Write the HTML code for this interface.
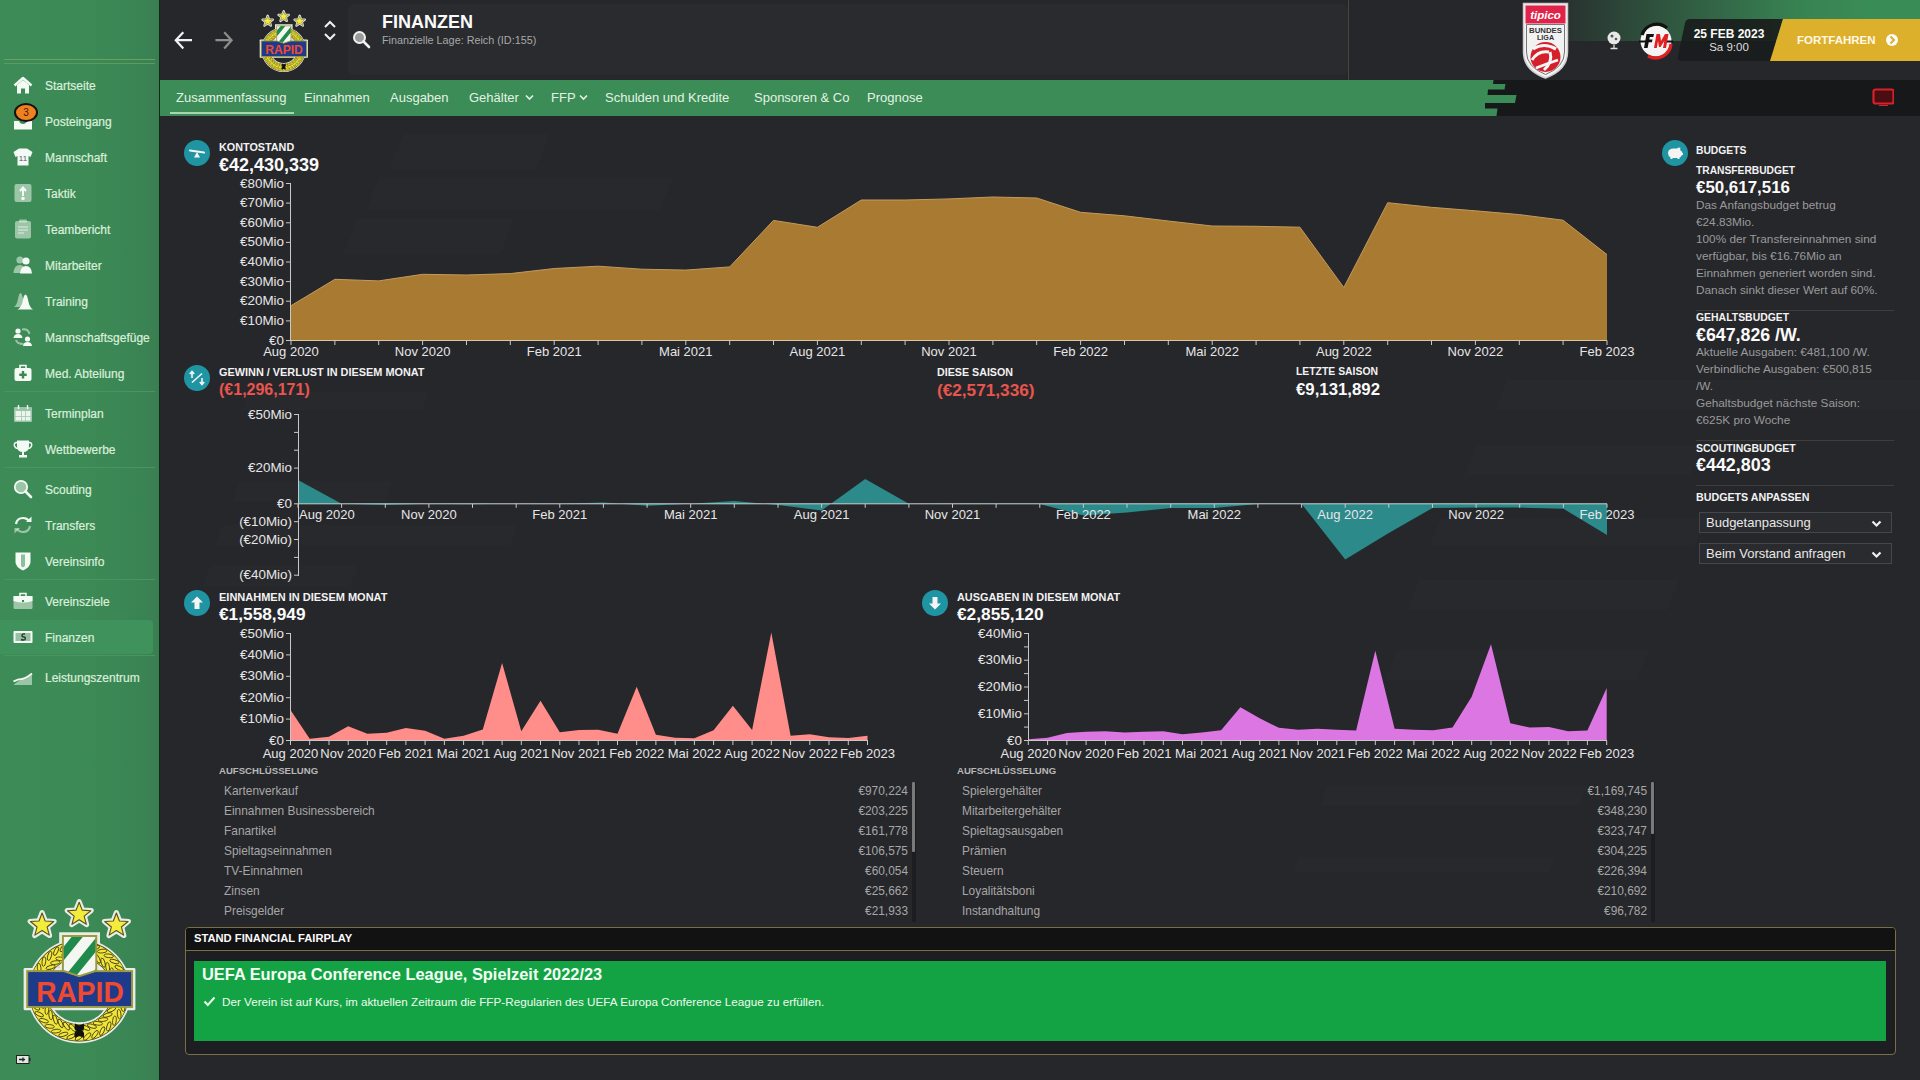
<!DOCTYPE html><html><head><meta charset="utf-8"><style>
*{margin:0;padding:0;box-sizing:border-box}
html,body{width:1920px;height:1080px;overflow:hidden;background:#26272b;font-family:"Liberation Sans", sans-serif}
.t{position:absolute;white-space:nowrap;line-height:1}
.abs{position:absolute}
svg{position:absolute;left:0;top:0}
</style></head><body>
<svg width="1920" height="1080" viewBox="0 0 1920 1080"><polygon points="403.0,134 550.0,134 536,169 389,169" fill="rgba(255,255,255,0.013)"/><polygon points="378.8,178 672.8,178 660,210 366,210" fill="rgba(255,255,255,0.013)"/><polygon points="357.0,219 514.0,219 500,254 343,254" fill="rgba(255,255,255,0.013)"/><polygon points="249.2,392 429.2,392 422,410 242,410" fill="rgba(255,255,255,0.01)"/><polygon points="240.0,481 393.0,481 385,501 232,501" fill="rgba(255,255,255,0.01)"/><polygon points="223.0,525 518.0,525 510,545 215,545" fill="rgba(255,255,255,0.01)"/><polygon points="210.8,565 358.8,565 350,587 202,587" fill="rgba(255,255,255,0.01)"/><polygon points="1507.0,380 1932.0,380 1920,410 1495,410" fill="rgba(255,255,255,0.013)"/><polygon points="1477.0,445 1702.0,445 1690,475 1465,475" fill="rgba(255,255,255,0.013)"/><polygon points="1440.8,518 1705.8,518 1695,545 1430,545" fill="rgba(255,255,255,0.013)"/><polygon points="1419.0,580 1679.0,580 1667,610 1407,610" fill="rgba(255,255,255,0.013)"/><polygon points="1397.0,650 1649.0,650 1637,680 1385,680" fill="rgba(255,255,255,0.013)"/><polygon points="1328.0,785 1588.0,785 1580,805 1320,805" fill="rgba(255,255,255,0.01)"/><polygon points="1298.0,857 1556.0,857 1550,872 1292,872" fill="rgba(255,255,255,0.01)"/></svg>
<svg width="1920" height="1080" viewBox="0 0 1920 1080" ><polygon points="291.0,340 291.0,305.7 334.9,279.3 378.7,280.9 422.6,274.3 466.5,275.0 510.3,273.6 554.2,268.5 598.1,266.2 641.9,269.2 685.8,270.1 729.7,266.9 773.5,220.4 817.4,227.3 861.3,200.0 905.1,200.0 949.0,198.9 992.9,197.0 1036.7,198.0 1080.6,212.3 1124.5,215.8 1168.3,221.0 1212.2,226.0 1256.1,226.3 1299.9,227.2 1343.8,287.5 1387.7,202.7 1431.5,207.3 1475.4,210.8 1519.3,214.6 1563.1,220.2 1607.0,254.6 1607.0,340" fill="#a97a32"/><polyline points="291.0,305.7 334.9,279.3 378.7,280.9 422.6,274.3 466.5,275.0 510.3,273.6 554.2,268.5 598.1,266.2 641.9,269.2 685.8,270.1 729.7,266.9 773.5,220.4 817.4,227.3 861.3,200.0 905.1,200.0 949.0,198.9 992.9,197.0 1036.7,198.0 1080.6,212.3 1124.5,215.8 1168.3,221.0 1212.2,226.0 1256.1,226.3 1299.9,227.2 1343.8,287.5 1387.7,202.7 1431.5,207.3 1475.4,210.8 1519.3,214.6 1563.1,220.2 1607.0,254.6" fill="none" stroke="#c49a5c" stroke-width="1"/><line x1="290.5" y1="183" x2="290.5" y2="340.5" stroke="#c8c8c8" stroke-width="1"/><line x1="290" y1="340.5" x2="1607" y2="340.5" stroke="#d8c8a0" stroke-width="1"/><line x1="286" y1="340.5" x2="290.5" y2="340.5" stroke="#c8c8c8"/><line x1="286" y1="320.9" x2="290.5" y2="320.9" stroke="#c8c8c8"/><line x1="286" y1="301.2" x2="290.5" y2="301.2" stroke="#c8c8c8"/><line x1="286" y1="281.6" x2="290.5" y2="281.6" stroke="#c8c8c8"/><line x1="286" y1="262.0" x2="290.5" y2="262.0" stroke="#c8c8c8"/><line x1="286" y1="242.4" x2="290.5" y2="242.4" stroke="#c8c8c8"/><line x1="286" y1="222.8" x2="290.5" y2="222.8" stroke="#c8c8c8"/><line x1="286" y1="203.1" x2="290.5" y2="203.1" stroke="#c8c8c8"/><line x1="286" y1="183.5" x2="290.5" y2="183.5" stroke="#c8c8c8"/><line x1="291.0" y1="340.5" x2="291.0" y2="345" stroke="#c8c8c8"/><line x1="334.9" y1="340.5" x2="334.9" y2="345" stroke="#c8c8c8"/><line x1="378.7" y1="340.5" x2="378.7" y2="345" stroke="#c8c8c8"/><line x1="422.6" y1="340.5" x2="422.6" y2="345" stroke="#c8c8c8"/><line x1="466.5" y1="340.5" x2="466.5" y2="345" stroke="#c8c8c8"/><line x1="510.3" y1="340.5" x2="510.3" y2="345" stroke="#c8c8c8"/><line x1="554.2" y1="340.5" x2="554.2" y2="345" stroke="#c8c8c8"/><line x1="598.1" y1="340.5" x2="598.1" y2="345" stroke="#c8c8c8"/><line x1="641.9" y1="340.5" x2="641.9" y2="345" stroke="#c8c8c8"/><line x1="685.8" y1="340.5" x2="685.8" y2="345" stroke="#c8c8c8"/><line x1="729.7" y1="340.5" x2="729.7" y2="345" stroke="#c8c8c8"/><line x1="773.5" y1="340.5" x2="773.5" y2="345" stroke="#c8c8c8"/><line x1="817.4" y1="340.5" x2="817.4" y2="345" stroke="#c8c8c8"/><line x1="861.3" y1="340.5" x2="861.3" y2="345" stroke="#c8c8c8"/><line x1="905.1" y1="340.5" x2="905.1" y2="345" stroke="#c8c8c8"/><line x1="949.0" y1="340.5" x2="949.0" y2="345" stroke="#c8c8c8"/><line x1="992.9" y1="340.5" x2="992.9" y2="345" stroke="#c8c8c8"/><line x1="1036.7" y1="340.5" x2="1036.7" y2="345" stroke="#c8c8c8"/><line x1="1080.6" y1="340.5" x2="1080.6" y2="345" stroke="#c8c8c8"/><line x1="1124.5" y1="340.5" x2="1124.5" y2="345" stroke="#c8c8c8"/><line x1="1168.3" y1="340.5" x2="1168.3" y2="345" stroke="#c8c8c8"/><line x1="1212.2" y1="340.5" x2="1212.2" y2="345" stroke="#c8c8c8"/><line x1="1256.1" y1="340.5" x2="1256.1" y2="345" stroke="#c8c8c8"/><line x1="1299.9" y1="340.5" x2="1299.9" y2="345" stroke="#c8c8c8"/><line x1="1343.8" y1="340.5" x2="1343.8" y2="345" stroke="#c8c8c8"/><line x1="1387.7" y1="340.5" x2="1387.7" y2="345" stroke="#c8c8c8"/><line x1="1431.5" y1="340.5" x2="1431.5" y2="345" stroke="#c8c8c8"/><line x1="1475.4" y1="340.5" x2="1475.4" y2="345" stroke="#c8c8c8"/><line x1="1519.3" y1="340.5" x2="1519.3" y2="345" stroke="#c8c8c8"/><line x1="1563.1" y1="340.5" x2="1563.1" y2="345" stroke="#c8c8c8"/><line x1="1607.0" y1="340.5" x2="1607.0" y2="345" stroke="#c8c8c8"/><polygon points="298.0,503.8 298.0,480.0 341.6,503.7 385.3,505.0 428.9,503.7 472.5,504.2 516.2,503.5 559.8,503.7 603.4,502.5 647.1,505.7 690.7,503.7 734.3,501.0 778.0,505.0 821.6,510.5 865.2,479.0 908.9,503.7 952.5,503.9 996.1,503.9 1039.8,503.9 1083.4,515.5 1127.0,512.5 1170.7,508.0 1214.3,508.0 1257.9,503.9 1301.6,503.9 1345.2,559.4 1388.8,533.0 1432.5,508.0 1476.1,507.6 1519.7,507.6 1563.4,508.7 1607.0,535.0 1607.0,503.8" fill="#2c8a8b"/><line x1="298.5" y1="414" x2="298.5" y2="576" stroke="#c8c8c8" stroke-width="1"/><line x1="298" y1="503.8" x2="1607" y2="503.8" stroke="#c8d0d0" stroke-width="1"/><line x1="294" y1="414.5" x2="298.5" y2="414.5" stroke="#c8c8c8"/><line x1="294" y1="432.4" x2="298.5" y2="432.4" stroke="#c8c8c8"/><line x1="294" y1="450.2" x2="298.5" y2="450.2" stroke="#c8c8c8"/><line x1="294" y1="468.1" x2="298.5" y2="468.1" stroke="#c8c8c8"/><line x1="294" y1="503.8" x2="298.5" y2="503.8" stroke="#c8c8c8"/><line x1="294" y1="521.7" x2="298.5" y2="521.7" stroke="#c8c8c8"/><line x1="294" y1="539.5" x2="298.5" y2="539.5" stroke="#c8c8c8"/><line x1="294" y1="557.4" x2="298.5" y2="557.4" stroke="#c8c8c8"/><line x1="294" y1="575.2" x2="298.5" y2="575.2" stroke="#c8c8c8"/><line x1="298.0" y1="503.8" x2="298.0" y2="507.8" stroke="#c8c8c8"/><line x1="341.6" y1="503.8" x2="341.6" y2="507.8" stroke="#c8c8c8"/><line x1="385.3" y1="503.8" x2="385.3" y2="507.8" stroke="#c8c8c8"/><line x1="428.9" y1="503.8" x2="428.9" y2="507.8" stroke="#c8c8c8"/><line x1="472.5" y1="503.8" x2="472.5" y2="507.8" stroke="#c8c8c8"/><line x1="516.2" y1="503.8" x2="516.2" y2="507.8" stroke="#c8c8c8"/><line x1="559.8" y1="503.8" x2="559.8" y2="507.8" stroke="#c8c8c8"/><line x1="603.4" y1="503.8" x2="603.4" y2="507.8" stroke="#c8c8c8"/><line x1="647.1" y1="503.8" x2="647.1" y2="507.8" stroke="#c8c8c8"/><line x1="690.7" y1="503.8" x2="690.7" y2="507.8" stroke="#c8c8c8"/><line x1="734.3" y1="503.8" x2="734.3" y2="507.8" stroke="#c8c8c8"/><line x1="778.0" y1="503.8" x2="778.0" y2="507.8" stroke="#c8c8c8"/><line x1="821.6" y1="503.8" x2="821.6" y2="507.8" stroke="#c8c8c8"/><line x1="865.2" y1="503.8" x2="865.2" y2="507.8" stroke="#c8c8c8"/><line x1="908.9" y1="503.8" x2="908.9" y2="507.8" stroke="#c8c8c8"/><line x1="952.5" y1="503.8" x2="952.5" y2="507.8" stroke="#c8c8c8"/><line x1="996.1" y1="503.8" x2="996.1" y2="507.8" stroke="#c8c8c8"/><line x1="1039.8" y1="503.8" x2="1039.8" y2="507.8" stroke="#c8c8c8"/><line x1="1083.4" y1="503.8" x2="1083.4" y2="507.8" stroke="#c8c8c8"/><line x1="1127.0" y1="503.8" x2="1127.0" y2="507.8" stroke="#c8c8c8"/><line x1="1170.7" y1="503.8" x2="1170.7" y2="507.8" stroke="#c8c8c8"/><line x1="1214.3" y1="503.8" x2="1214.3" y2="507.8" stroke="#c8c8c8"/><line x1="1257.9" y1="503.8" x2="1257.9" y2="507.8" stroke="#c8c8c8"/><line x1="1301.6" y1="503.8" x2="1301.6" y2="507.8" stroke="#c8c8c8"/><line x1="1345.2" y1="503.8" x2="1345.2" y2="507.8" stroke="#c8c8c8"/><line x1="1388.8" y1="503.8" x2="1388.8" y2="507.8" stroke="#c8c8c8"/><line x1="1432.5" y1="503.8" x2="1432.5" y2="507.8" stroke="#c8c8c8"/><line x1="1476.1" y1="503.8" x2="1476.1" y2="507.8" stroke="#c8c8c8"/><line x1="1519.7" y1="503.8" x2="1519.7" y2="507.8" stroke="#c8c8c8"/><line x1="1563.4" y1="503.8" x2="1563.4" y2="507.8" stroke="#c8c8c8"/><line x1="1607.0" y1="503.8" x2="1607.0" y2="507.8" stroke="#c8c8c8"/><polygon points="290.5,740.5 290.5,710.0 309.7,738.7 329.0,736.7 348.2,726.3 367.4,733.8 386.7,732.8 405.9,728.0 425.1,730.8 444.4,738.7 463.6,735.8 482.8,729.5 502.1,663.0 521.3,731.3 540.5,700.8 559.8,732.2 579.0,730.0 598.2,729.7 617.5,733.8 636.7,686.7 655.9,734.7 675.2,737.8 694.4,738.3 713.6,730.3 732.9,705.8 752.1,730.0 771.3,632.5 790.6,735.8 809.8,734.2 829.0,737.2 848.3,738.0 867.5,735.8 867.5,740.5" fill="#ff8d8a"/><line x1="290.5" y1="633" x2="290.5" y2="741" stroke="#c8c8c8"/><line x1="290" y1="740.5" x2="868" y2="740.5" stroke="#c8c8c8"/><line x1="286" y1="740.5" x2="290.5" y2="740.5" stroke="#c8c8c8"/><line x1="286" y1="719.1" x2="290.5" y2="719.1" stroke="#c8c8c8"/><line x1="286" y1="697.7" x2="290.5" y2="697.7" stroke="#c8c8c8"/><line x1="286" y1="676.3" x2="290.5" y2="676.3" stroke="#c8c8c8"/><line x1="286" y1="654.9" x2="290.5" y2="654.9" stroke="#c8c8c8"/><line x1="286" y1="633.5" x2="290.5" y2="633.5" stroke="#c8c8c8"/><line x1="290.5" y1="740.5" x2="290.5" y2="745" stroke="#c8c8c8"/><line x1="309.7" y1="740.5" x2="309.7" y2="745" stroke="#c8c8c8"/><line x1="329.0" y1="740.5" x2="329.0" y2="745" stroke="#c8c8c8"/><line x1="348.2" y1="740.5" x2="348.2" y2="745" stroke="#c8c8c8"/><line x1="367.4" y1="740.5" x2="367.4" y2="745" stroke="#c8c8c8"/><line x1="386.7" y1="740.5" x2="386.7" y2="745" stroke="#c8c8c8"/><line x1="405.9" y1="740.5" x2="405.9" y2="745" stroke="#c8c8c8"/><line x1="425.1" y1="740.5" x2="425.1" y2="745" stroke="#c8c8c8"/><line x1="444.4" y1="740.5" x2="444.4" y2="745" stroke="#c8c8c8"/><line x1="463.6" y1="740.5" x2="463.6" y2="745" stroke="#c8c8c8"/><line x1="482.8" y1="740.5" x2="482.8" y2="745" stroke="#c8c8c8"/><line x1="502.1" y1="740.5" x2="502.1" y2="745" stroke="#c8c8c8"/><line x1="521.3" y1="740.5" x2="521.3" y2="745" stroke="#c8c8c8"/><line x1="540.5" y1="740.5" x2="540.5" y2="745" stroke="#c8c8c8"/><line x1="559.8" y1="740.5" x2="559.8" y2="745" stroke="#c8c8c8"/><line x1="579.0" y1="740.5" x2="579.0" y2="745" stroke="#c8c8c8"/><line x1="598.2" y1="740.5" x2="598.2" y2="745" stroke="#c8c8c8"/><line x1="617.5" y1="740.5" x2="617.5" y2="745" stroke="#c8c8c8"/><line x1="636.7" y1="740.5" x2="636.7" y2="745" stroke="#c8c8c8"/><line x1="655.9" y1="740.5" x2="655.9" y2="745" stroke="#c8c8c8"/><line x1="675.2" y1="740.5" x2="675.2" y2="745" stroke="#c8c8c8"/><line x1="694.4" y1="740.5" x2="694.4" y2="745" stroke="#c8c8c8"/><line x1="713.6" y1="740.5" x2="713.6" y2="745" stroke="#c8c8c8"/><line x1="732.9" y1="740.5" x2="732.9" y2="745" stroke="#c8c8c8"/><line x1="752.1" y1="740.5" x2="752.1" y2="745" stroke="#c8c8c8"/><line x1="771.3" y1="740.5" x2="771.3" y2="745" stroke="#c8c8c8"/><line x1="790.6" y1="740.5" x2="790.6" y2="745" stroke="#c8c8c8"/><line x1="809.8" y1="740.5" x2="809.8" y2="745" stroke="#c8c8c8"/><line x1="829.0" y1="740.5" x2="829.0" y2="745" stroke="#c8c8c8"/><line x1="848.3" y1="740.5" x2="848.3" y2="745" stroke="#c8c8c8"/><line x1="867.5" y1="740.5" x2="867.5" y2="745" stroke="#c8c8c8"/><polygon points="1028.3,740.2 1028.3,739.2 1047.6,737.7 1066.9,733.0 1086.1,731.7 1105.4,731.3 1124.7,732.5 1144.0,731.7 1163.3,731.3 1182.5,734.2 1201.8,732.5 1221.1,730.3 1240.4,707.2 1259.7,718.3 1278.9,727.8 1298.2,729.7 1317.5,728.7 1336.8,729.7 1356.1,730.5 1375.3,650.8 1394.6,728.7 1413.9,729.7 1433.2,730.3 1452.5,727.5 1471.7,696.7 1491.0,644.2 1510.3,723.3 1529.6,727.5 1548.9,727.0 1568.1,731.3 1587.4,730.5 1606.7,688.0 1606.7,740.2" fill="#dc76e2"/><line x1="1028.5" y1="633" x2="1028.5" y2="741" stroke="#c8c8c8"/><line x1="1028" y1="740.5" x2="1607" y2="740.5" stroke="#c8c8c8"/><line x1="1024" y1="740.5" x2="1028.5" y2="740.5" stroke="#c8c8c8"/><line x1="1024" y1="727.1" x2="1028.5" y2="727.1" stroke="#c8c8c8"/><line x1="1024" y1="713.8" x2="1028.5" y2="713.8" stroke="#c8c8c8"/><line x1="1024" y1="700.4" x2="1028.5" y2="700.4" stroke="#c8c8c8"/><line x1="1024" y1="687.0" x2="1028.5" y2="687.0" stroke="#c8c8c8"/><line x1="1024" y1="673.6" x2="1028.5" y2="673.6" stroke="#c8c8c8"/><line x1="1024" y1="660.2" x2="1028.5" y2="660.2" stroke="#c8c8c8"/><line x1="1024" y1="646.9" x2="1028.5" y2="646.9" stroke="#c8c8c8"/><line x1="1024" y1="633.5" x2="1028.5" y2="633.5" stroke="#c8c8c8"/><line x1="1028.3" y1="740.5" x2="1028.3" y2="745" stroke="#c8c8c8"/><line x1="1047.6" y1="740.5" x2="1047.6" y2="745" stroke="#c8c8c8"/><line x1="1066.9" y1="740.5" x2="1066.9" y2="745" stroke="#c8c8c8"/><line x1="1086.1" y1="740.5" x2="1086.1" y2="745" stroke="#c8c8c8"/><line x1="1105.4" y1="740.5" x2="1105.4" y2="745" stroke="#c8c8c8"/><line x1="1124.7" y1="740.5" x2="1124.7" y2="745" stroke="#c8c8c8"/><line x1="1144.0" y1="740.5" x2="1144.0" y2="745" stroke="#c8c8c8"/><line x1="1163.3" y1="740.5" x2="1163.3" y2="745" stroke="#c8c8c8"/><line x1="1182.5" y1="740.5" x2="1182.5" y2="745" stroke="#c8c8c8"/><line x1="1201.8" y1="740.5" x2="1201.8" y2="745" stroke="#c8c8c8"/><line x1="1221.1" y1="740.5" x2="1221.1" y2="745" stroke="#c8c8c8"/><line x1="1240.4" y1="740.5" x2="1240.4" y2="745" stroke="#c8c8c8"/><line x1="1259.7" y1="740.5" x2="1259.7" y2="745" stroke="#c8c8c8"/><line x1="1278.9" y1="740.5" x2="1278.9" y2="745" stroke="#c8c8c8"/><line x1="1298.2" y1="740.5" x2="1298.2" y2="745" stroke="#c8c8c8"/><line x1="1317.5" y1="740.5" x2="1317.5" y2="745" stroke="#c8c8c8"/><line x1="1336.8" y1="740.5" x2="1336.8" y2="745" stroke="#c8c8c8"/><line x1="1356.1" y1="740.5" x2="1356.1" y2="745" stroke="#c8c8c8"/><line x1="1375.3" y1="740.5" x2="1375.3" y2="745" stroke="#c8c8c8"/><line x1="1394.6" y1="740.5" x2="1394.6" y2="745" stroke="#c8c8c8"/><line x1="1413.9" y1="740.5" x2="1413.9" y2="745" stroke="#c8c8c8"/><line x1="1433.2" y1="740.5" x2="1433.2" y2="745" stroke="#c8c8c8"/><line x1="1452.5" y1="740.5" x2="1452.5" y2="745" stroke="#c8c8c8"/><line x1="1471.7" y1="740.5" x2="1471.7" y2="745" stroke="#c8c8c8"/><line x1="1491.0" y1="740.5" x2="1491.0" y2="745" stroke="#c8c8c8"/><line x1="1510.3" y1="740.5" x2="1510.3" y2="745" stroke="#c8c8c8"/><line x1="1529.6" y1="740.5" x2="1529.6" y2="745" stroke="#c8c8c8"/><line x1="1548.9" y1="740.5" x2="1548.9" y2="745" stroke="#c8c8c8"/><line x1="1568.1" y1="740.5" x2="1568.1" y2="745" stroke="#c8c8c8"/><line x1="1587.4" y1="740.5" x2="1587.4" y2="745" stroke="#c8c8c8"/><line x1="1606.7" y1="740.5" x2="1606.7" y2="745" stroke="#c8c8c8"/></svg>
<div class="abs" style="left:0;top:0;width:159px;height:1080px;background:linear-gradient(90deg,#3d8c58 0%,#3c8a56 55%,#3a8454 88%,#3a7e52 100%)"></div><div class="abs" style="left:4px;top:59px;width:151px;height:1px;background:#66a062"></div><div class="abs" style="left:4px;top:63px;width:151px;height:1px;background:#5e9c5e"></div><div class="abs" style="left:0;top:620px;width:153px;height:34px;background:#3f925c;border-radius:0 4px 4px 0"></div><div class="abs" style="left:4px;top:391px;width:151px;height:1px;background:#4a9461"></div><div class="abs" style="left:4px;top:467px;width:151px;height:1px;background:#4a9461"></div><div class="abs" style="left:4px;top:579px;width:151px;height:1px;background:#4a9461"></div><div class="abs" style="left:4px;top:655px;width:151px;height:1px;background:#4a9461"></div><div class="t" style="left:45px;top:80px;font-size:12px;color:#dcefdc;font-weight:normal;-webkit-text-stroke:0.2px #dcefdc">Startseite</div>
<svg class="abs" style="left:13px;top:75px;overflow:visible" width="20" height="20" viewBox="0 0 20 20"><path d="M1.5 10.5 L10 3 L18.5 10.5" stroke="#f4faf4" stroke-width="2.4" fill="none" stroke-linejoin="round"/><path d="M4 10 L10 5 L16 10 V18.5 H12 V13.5 H8 V18.5 H4Z" fill="#f4faf4"/></svg><div class="t" style="left:45px;top:116px;font-size:12px;color:#dcefdc;font-weight:normal;-webkit-text-stroke:0.2px #dcefdc">Posteingang</div>
<svg class="abs" style="left:13px;top:111px;overflow:visible" width="20" height="20" viewBox="0 0 20 20"><path d="M1 10 H6 Q7 13 10 13 Q13 13 14 10 H19 V18.5 H1Z" fill="#f4faf4"/><ellipse cx="13" cy="1.5" rx="11" ry="8.5" fill="#f08020" stroke="#111" stroke-width="2"/><text x="13" y="5" text-anchor="middle" font-family="Liberation Sans" font-size="10" fill="#3a1a00">3</text></svg><div class="t" style="left:45px;top:152px;font-size:12px;color:#dcefdc;font-weight:normal;-webkit-text-stroke:0.2px #dcefdc">Mannschaft</div>
<svg class="abs" style="left:13px;top:147px;overflow:visible" width="20" height="20" viewBox="0 0 20 20"><path d="M6 1.5 H14 L19.5 5 L17.5 10 L15.5 9 V18.5 H4.5 V9 L2.5 10 L0.5 5Z" fill="#f4faf4"/><text x="10" y="13.5" text-anchor="middle" font-family="Liberation Sans" font-size="8" fill="#556">11</text></svg><div class="t" style="left:45px;top:188px;font-size:12px;color:#dcefdc;font-weight:normal;-webkit-text-stroke:0.2px #dcefdc">Taktik</div>
<svg class="abs" style="left:13px;top:183px;overflow:visible" width="20" height="20" viewBox="0 0 20 20"><rect x="1.5" y="1" width="17" height="18" rx="2" fill="rgba(235,245,235,.55)"/><path d="M10 13 V5 M7 8 L10 4.5 L13 8" stroke="#f4faf4" stroke-width="2" fill="none"/><circle cx="10" cy="15.5" r="1.8" fill="#f4faf4"/></svg><div class="t" style="left:45px;top:224px;font-size:12px;color:#dcefdc;font-weight:normal;-webkit-text-stroke:0.2px #dcefdc">Teambericht</div>
<svg class="abs" style="left:13px;top:219px;overflow:visible" width="20" height="20" viewBox="0 0 20 20"><rect x="2" y="2" width="16" height="17.5" rx="2" fill="rgba(235,245,235,.55)"/><rect x="6" y="0.5" width="8" height="3" rx="1" fill="rgba(235,245,235,.55)"/><path d="M5 8 H15 M5 11 H15 M5 14 H11" stroke="#f4faf4" stroke-width="1.2" opacity=".8"/></svg><div class="t" style="left:45px;top:260px;font-size:12px;color:#dcefdc;font-weight:normal;-webkit-text-stroke:0.2px #dcefdc">Mitarbeiter</div>
<svg class="abs" style="left:13px;top:255px;overflow:visible" width="20" height="20" viewBox="0 0 20 20"><circle cx="7" cy="5" r="3.6" fill="rgba(235,245,235,.55)"/><path d="M0.5 18 Q1 10 7 10 Q12 10 12 18Z" fill="rgba(235,245,235,.55)"/><circle cx="13" cy="6" r="3.6" fill="#f4faf4"/><path d="M7 18.5 Q7.5 11 13 11 Q18.5 11 19 18.5Z" fill="#f4faf4"/></svg><div class="t" style="left:45px;top:296px;font-size:12px;color:#dcefdc;font-weight:normal;-webkit-text-stroke:0.2px #dcefdc">Training</div>
<svg class="abs" style="left:13px;top:291px;overflow:visible" width="20" height="20" viewBox="0 0 20 20"><path d="M1 16 Q4 14 5 8 Q6 2 7.5 2 Q9 2 10 8 Q10.5 12 12 14 L9 16Z" fill="rgba(235,245,235,.55)"/><path d="M4.5 18.5 Q8.5 16.5 9.7 10 Q10.8 3.5 12.5 3.5 Q14.2 3.5 15.3 10 Q16.5 16.5 20 18.5Z" fill="#f4faf4"/></svg><div class="t" style="left:45px;top:332px;font-size:12px;color:#dcefdc;font-weight:normal;-webkit-text-stroke:0.2px #dcefdc">Mannschaftsgefüge</div>
<svg class="abs" style="left:13px;top:327px;overflow:visible" width="20" height="20" viewBox="0 0 20 20"><circle cx="5" cy="4" r="2.6" fill="#f4faf4"/><path d="M0.5 11 Q1 7 5 7 Q9 7 9.5 11Z" fill="#f4faf4"/><circle cx="14.5" cy="12" r="2.6" fill="#f4faf4"/><path d="M10 19 Q10.5 15 14.5 15 Q18.5 15 19 19Z" fill="#f4faf4"/><path d="M9 2.5 Q15 1.5 16.5 7 M10.5 17 Q4 17 3 13" stroke="rgba(235,245,235,.55)" stroke-width="2" fill="none"/></svg><div class="t" style="left:45px;top:368px;font-size:12px;color:#dcefdc;font-weight:normal;-webkit-text-stroke:0.2px #dcefdc">Med. Abteilung</div>
<svg class="abs" style="left:13px;top:363px;overflow:visible" width="20" height="20" viewBox="0 0 20 20"><path d="M7 5 V2.5 H13 V5" stroke="#f4faf4" stroke-width="1.6" fill="none"/><rect x="1.5" y="5" width="17" height="13" rx="2" fill="#f4faf4"/><path d="M10 8 V15.5 M6.3 11.7 H13.7" stroke="#3a8753" stroke-width="2.4"/></svg><div class="t" style="left:45px;top:408px;font-size:12px;color:#dcefdc;font-weight:normal;-webkit-text-stroke:0.2px #dcefdc">Terminplan</div>
<svg class="abs" style="left:13px;top:403px;overflow:visible" width="20" height="20" viewBox="0 0 20 20"><rect x="1" y="4" width="18" height="15" rx="1" fill="rgba(235,245,235,.55)"/><path d="M5.5 2 V6 M14.5 2 V6" stroke="#f4faf4" stroke-width="1.4"/><path d="M2.5 8 H8 V13 H2.5Z M8.7 8 H12 V13 H8.7Z M12.7 8 H17.5 V13 H12.7Z M2.5 13.7 H8 V17.5 H2.5Z M8.7 13.7 H12 V17.5 H8.7Z M12.7 13.7 H17.5 V17.5 H12.7Z" fill="#f4faf4" opacity=".9"/></svg><div class="t" style="left:45px;top:444px;font-size:12px;color:#dcefdc;font-weight:normal;-webkit-text-stroke:0.2px #dcefdc">Wettbewerbe</div>
<svg class="abs" style="left:13px;top:439px;overflow:visible" width="20" height="20" viewBox="0 0 20 20"><path d="M4 1.5 H16 V7 Q16 13 10 13 Q4 13 4 7Z" fill="#f4faf4"/><path d="M4 3.5 Q0.5 3.5 1.5 7 Q2.5 9.5 5 9.5 M16 3.5 Q19.5 3.5 18.5 7 Q17.5 9.5 15 9.5" stroke="#f4faf4" stroke-width="1.5" fill="none"/><path d="M9 13 H11 V16 H14 V18.5 H6 V16 H9Z" fill="#f4faf4"/></svg><div class="t" style="left:45px;top:484px;font-size:12px;color:#dcefdc;font-weight:normal;-webkit-text-stroke:0.2px #dcefdc">Scouting</div>
<svg class="abs" style="left:13px;top:479px;overflow:visible" width="20" height="20" viewBox="0 0 20 20"><circle cx="8" cy="8" r="6.2" fill="rgba(235,245,235,.55)" stroke="#f4faf4" stroke-width="1.8"/><path d="M12.5 12.5 L18 18" stroke="#f4faf4" stroke-width="2.6" stroke-linecap="round"/></svg><div class="t" style="left:45px;top:520px;font-size:12px;color:#dcefdc;font-weight:normal;-webkit-text-stroke:0.2px #dcefdc">Transfers</div>
<svg class="abs" style="left:13px;top:515px;overflow:visible" width="20" height="20" viewBox="0 0 20 20"><path d="M3 9 Q4 3 10 3 Q14 3 16 6" stroke="#f4faf4" stroke-width="2.2" fill="none"/><path d="M13 7 H18.5 V1.5Z" fill="#f4faf4"/><path d="M17 11 Q16 17 10 17 Q6 17 4 14" stroke="rgba(235,245,235,.55)" stroke-width="2.2" fill="none"/><path d="M7 13 H1.5 V18.5Z" fill="rgba(235,245,235,.55)"/></svg><div class="t" style="left:45px;top:556px;font-size:12px;color:#dcefdc;font-weight:normal;-webkit-text-stroke:0.2px #dcefdc">Vereinsinfo</div>
<svg class="abs" style="left:13px;top:551px;overflow:visible" width="20" height="20" viewBox="0 0 20 20"><path d="M2.5 1.5 H17.5 V11 Q17.5 16 10 19.5 Q2.5 16 2.5 11Z" fill="#f4faf4"/><path d="M8 3.5 H12 V15 L10 16.5 L8 15Z" fill="#8cc09a"/></svg><div class="t" style="left:45px;top:596px;font-size:12px;color:#dcefdc;font-weight:normal;-webkit-text-stroke:0.2px #dcefdc">Vereinsziele</div>
<svg class="abs" style="left:13px;top:591px;overflow:visible" width="20" height="20" viewBox="0 0 20 20"><path d="M7 5 V2.5 H13 V5" stroke="#f4faf4" stroke-width="1.5" fill="none"/><rect x="0.5" y="5" width="19" height="13" rx="1.5" fill="rgba(235,245,235,.55)"/><path d="M0.5 5 H19.5 V10 Q10 13 0.5 10Z" fill="#f4faf4"/><rect x="9" y="9" width="2" height="2" fill="#3a8753"/></svg><div class="t" style="left:45px;top:632px;font-size:12px;color:#dcefdc;font-weight:normal;-webkit-text-stroke:0.2px #dcefdc">Finanzen</div>
<svg class="abs" style="left:13px;top:627px;overflow:visible" width="20" height="20" viewBox="0 0 20 20"><rect x="0.5" y="4" width="19" height="12" rx="1" fill="#f4faf4"/><rect x="2.5" y="6" width="15" height="8" fill="#3a8753" opacity=".5"/><path d="M12 7 Q9 6.5 9 8.5 Q9 10 11 10 Q13 10.5 12 12.5 Q10.5 13.5 8 12.5" stroke="#2a3a2a" stroke-width="1.4" fill="none"/></svg><div class="t" style="left:45px;top:672px;font-size:12px;color:#dcefdc;font-weight:normal;-webkit-text-stroke:0.2px #dcefdc">Leistungszentrum</div>
<svg class="abs" style="left:13px;top:667px;overflow:visible" width="20" height="20" viewBox="0 0 20 20"><path d="M0.5 18 Q6 13 9 13 Q13 13 19 8 V18Z" fill="rgba(235,245,235,.55)"/><path d="M0.5 14.5 Q5 12 9 12 Q13 11.5 19 6.5" stroke="#f4faf4" stroke-width="2" fill="none"/></svg><div class="abs" style="left:348px;top:4px;width:1000px;height:71px;background:#2a2b2f;border-radius:6px"></div><div class="t" style="left:382px;top:13px;font-size:18px;color:#fafafa;font-weight:bold;">FINANZEN</div>
<div class="t" style="left:382px;top:35px;font-size:10.8px;color:#a8a8a8;font-weight:normal;">Finanzielle Lage: Reich (ID:155)</div>
<div class="abs" style="left:160px;top:80px;width:1329px;height:36px;background:#3b8c57"></div><div class="abs" style="left:159px;top:0;width:1px;height:1080px;background:#0f2a17"></div><div class="abs" style="left:1485px;top:80px;width:435px;height:36px;background:#17181a"></div><div class="t" style="left:176px;top:91px;font-size:13px;color:#e3f3e3;font-weight:normal;">Zusammenfassung</div>
<div class="t" style="left:304px;top:91px;font-size:13px;color:#e3f3e3;font-weight:normal;">Einnahmen</div>
<div class="t" style="left:390px;top:91px;font-size:13px;color:#e3f3e3;font-weight:normal;">Ausgaben</div>
<div class="t" style="left:469px;top:91px;font-size:13px;color:#e3f3e3;font-weight:normal;">Gehälter</div>
<div class="t" style="left:551px;top:91px;font-size:13px;color:#e3f3e3;font-weight:normal;">FFP</div>
<div class="t" style="left:605px;top:91px;font-size:13px;color:#e3f3e3;font-weight:normal;">Schulden und Kredite</div>
<div class="t" style="left:754px;top:91px;font-size:13px;color:#e3f3e3;font-weight:normal;">Sponsoren &amp; Co</div>
<div class="t" style="left:867px;top:91px;font-size:13px;color:#e3f3e3;font-weight:normal;">Prognose</div>
<div class="abs" style="left:170px;top:112px;width:124px;height:2px;background:#a9d6b0"></div><div class="t" style="right:1636px;top:333.5px;font-size:13.4px;color:#e6e6e6;font-weight:normal;">€0</div>
<div class="t" style="right:1636px;top:313.875px;font-size:13.4px;color:#e6e6e6;font-weight:normal;">€10Mio</div>
<div class="t" style="right:1636px;top:294.25px;font-size:13.4px;color:#e6e6e6;font-weight:normal;">€20Mio</div>
<div class="t" style="right:1636px;top:274.625px;font-size:13.4px;color:#e6e6e6;font-weight:normal;">€30Mio</div>
<div class="t" style="right:1636px;top:255.0px;font-size:13.4px;color:#e6e6e6;font-weight:normal;">€40Mio</div>
<div class="t" style="right:1636px;top:235.375px;font-size:13.4px;color:#e6e6e6;font-weight:normal;">€50Mio</div>
<div class="t" style="right:1636px;top:215.75px;font-size:13.4px;color:#e6e6e6;font-weight:normal;">€60Mio</div>
<div class="t" style="right:1636px;top:196.125px;font-size:13.4px;color:#e6e6e6;font-weight:normal;">€70Mio</div>
<div class="t" style="right:1636px;top:176.5px;font-size:13.4px;color:#e6e6e6;font-weight:normal;">€80Mio</div>
<div class="t" style="left:291.0px;transform:translateX(-50%);top:345px;font-size:13px;color:#e6e6e6;font-weight:normal;">Aug 2020</div>
<div class="t" style="left:422.6px;transform:translateX(-50%);top:345px;font-size:13px;color:#e6e6e6;font-weight:normal;">Nov 2020</div>
<div class="t" style="left:554.2px;transform:translateX(-50%);top:345px;font-size:13px;color:#e6e6e6;font-weight:normal;">Feb 2021</div>
<div class="t" style="left:685.8px;transform:translateX(-50%);top:345px;font-size:13px;color:#e6e6e6;font-weight:normal;">Mai 2021</div>
<div class="t" style="left:817.4px;transform:translateX(-50%);top:345px;font-size:13px;color:#e6e6e6;font-weight:normal;">Aug 2021</div>
<div class="t" style="left:949.0px;transform:translateX(-50%);top:345px;font-size:13px;color:#e6e6e6;font-weight:normal;">Nov 2021</div>
<div class="t" style="left:1080.6px;transform:translateX(-50%);top:345px;font-size:13px;color:#e6e6e6;font-weight:normal;">Feb 2022</div>
<div class="t" style="left:1212.2px;transform:translateX(-50%);top:345px;font-size:13px;color:#e6e6e6;font-weight:normal;">Mai 2022</div>
<div class="t" style="left:1343.8px;transform:translateX(-50%);top:345px;font-size:13px;color:#e6e6e6;font-weight:normal;">Aug 2022</div>
<div class="t" style="left:1475.4px;transform:translateX(-50%);top:345px;font-size:13px;color:#e6e6e6;font-weight:normal;">Nov 2022</div>
<div class="t" style="left:1607.0px;transform:translateX(-50%);top:345px;font-size:13px;color:#e6e6e6;font-weight:normal;">Feb 2023</div>
<div class="t" style="right:1628px;top:407.5px;font-size:13.4px;color:#e6e6e6;font-weight:normal;">€50Mio</div>
<div class="t" style="right:1628px;top:461.08px;font-size:13.4px;color:#e6e6e6;font-weight:normal;">€20Mio</div>
<div class="t" style="right:1628px;top:496.8px;font-size:13.4px;color:#e6e6e6;font-weight:normal;">€0</div>
<div class="t" style="right:1628px;top:514.66px;font-size:13.4px;color:#e6e6e6;font-weight:normal;">(€10Mio)</div>
<div class="t" style="right:1628px;top:532.52px;font-size:13.4px;color:#e6e6e6;font-weight:normal;">(€20Mio)</div>
<div class="t" style="right:1628px;top:568.24px;font-size:13.4px;color:#e6e6e6;font-weight:normal;">(€40Mio)</div>
<div class="t" style="left:299px;top:508px;font-size:13px;color:#e6e6e6;font-weight:normal;">Aug 2020</div>
<div class="t" style="left:428.9px;transform:translateX(-50%);top:508px;font-size:13px;color:#e6e6e6;font-weight:normal;">Nov 2020</div>
<div class="t" style="left:559.8px;transform:translateX(-50%);top:508px;font-size:13px;color:#e6e6e6;font-weight:normal;">Feb 2021</div>
<div class="t" style="left:690.7px;transform:translateX(-50%);top:508px;font-size:13px;color:#e6e6e6;font-weight:normal;">Mai 2021</div>
<div class="t" style="left:821.6px;transform:translateX(-50%);top:508px;font-size:13px;color:#e6e6e6;font-weight:normal;">Aug 2021</div>
<div class="t" style="left:952.5px;transform:translateX(-50%);top:508px;font-size:13px;color:#e6e6e6;font-weight:normal;">Nov 2021</div>
<div class="t" style="left:1083.4px;transform:translateX(-50%);top:508px;font-size:13px;color:#e6e6e6;font-weight:normal;">Feb 2022</div>
<div class="t" style="left:1214.3px;transform:translateX(-50%);top:508px;font-size:13px;color:#e6e6e6;font-weight:normal;">Mai 2022</div>
<div class="t" style="left:1345.2px;transform:translateX(-50%);top:508px;font-size:13px;color:#e6e6e6;font-weight:normal;">Aug 2022</div>
<div class="t" style="left:1476.1px;transform:translateX(-50%);top:508px;font-size:13px;color:#e6e6e6;font-weight:normal;">Nov 2022</div>
<div class="t" style="left:1607.0px;transform:translateX(-50%);top:508px;font-size:13px;color:#e6e6e6;font-weight:normal;">Feb 2023</div>
<div class="t" style="right:1636px;top:733.5px;font-size:13.4px;color:#e6e6e6;font-weight:normal;">€0</div>
<div class="t" style="right:1636px;top:712.1px;font-size:13.4px;color:#e6e6e6;font-weight:normal;">€10Mio</div>
<div class="t" style="right:1636px;top:690.7px;font-size:13.4px;color:#e6e6e6;font-weight:normal;">€20Mio</div>
<div class="t" style="right:1636px;top:669.3px;font-size:13.4px;color:#e6e6e6;font-weight:normal;">€30Mio</div>
<div class="t" style="right:1636px;top:647.9px;font-size:13.4px;color:#e6e6e6;font-weight:normal;">€40Mio</div>
<div class="t" style="right:1636px;top:626.5px;font-size:13.4px;color:#e6e6e6;font-weight:normal;">€50Mio</div>
<div class="t" style="left:290.5px;transform:translateX(-50%);top:746.5px;font-size:13px;color:#e6e6e6;font-weight:normal;">Aug 2020</div>
<div class="t" style="left:348.2px;transform:translateX(-50%);top:746.5px;font-size:13px;color:#e6e6e6;font-weight:normal;">Nov 2020</div>
<div class="t" style="left:405.9px;transform:translateX(-50%);top:746.5px;font-size:13px;color:#e6e6e6;font-weight:normal;">Feb 2021</div>
<div class="t" style="left:463.6px;transform:translateX(-50%);top:746.5px;font-size:13px;color:#e6e6e6;font-weight:normal;">Mai 2021</div>
<div class="t" style="left:521.3px;transform:translateX(-50%);top:746.5px;font-size:13px;color:#e6e6e6;font-weight:normal;">Aug 2021</div>
<div class="t" style="left:579.0px;transform:translateX(-50%);top:746.5px;font-size:13px;color:#e6e6e6;font-weight:normal;">Nov 2021</div>
<div class="t" style="left:636.7px;transform:translateX(-50%);top:746.5px;font-size:13px;color:#e6e6e6;font-weight:normal;">Feb 2022</div>
<div class="t" style="left:694.4px;transform:translateX(-50%);top:746.5px;font-size:13px;color:#e6e6e6;font-weight:normal;">Mai 2022</div>
<div class="t" style="left:752.1px;transform:translateX(-50%);top:746.5px;font-size:13px;color:#e6e6e6;font-weight:normal;">Aug 2022</div>
<div class="t" style="left:809.8px;transform:translateX(-50%);top:746.5px;font-size:13px;color:#e6e6e6;font-weight:normal;">Nov 2022</div>
<div class="t" style="left:867.5px;transform:translateX(-50%);top:746.5px;font-size:13px;color:#e6e6e6;font-weight:normal;">Feb 2023</div>
<div class="t" style="right:898px;top:733.5px;font-size:13.4px;color:#e6e6e6;font-weight:normal;">€0</div>
<div class="t" style="right:898px;top:706.75px;font-size:13.4px;color:#e6e6e6;font-weight:normal;">€10Mio</div>
<div class="t" style="right:898px;top:680.0px;font-size:13.4px;color:#e6e6e6;font-weight:normal;">€20Mio</div>
<div class="t" style="right:898px;top:653.25px;font-size:13.4px;color:#e6e6e6;font-weight:normal;">€30Mio</div>
<div class="t" style="right:898px;top:626.5px;font-size:13.4px;color:#e6e6e6;font-weight:normal;">€40Mio</div>
<div class="t" style="left:1028.3px;transform:translateX(-50%);top:746.5px;font-size:13px;color:#e6e6e6;font-weight:normal;">Aug 2020</div>
<div class="t" style="left:1086.1399999999999px;transform:translateX(-50%);top:746.5px;font-size:13px;color:#e6e6e6;font-weight:normal;">Nov 2020</div>
<div class="t" style="left:1143.98px;transform:translateX(-50%);top:746.5px;font-size:13px;color:#e6e6e6;font-weight:normal;">Feb 2021</div>
<div class="t" style="left:1201.82px;transform:translateX(-50%);top:746.5px;font-size:13px;color:#e6e6e6;font-weight:normal;">Mai 2021</div>
<div class="t" style="left:1259.66px;transform:translateX(-50%);top:746.5px;font-size:13px;color:#e6e6e6;font-weight:normal;">Aug 2021</div>
<div class="t" style="left:1317.5px;transform:translateX(-50%);top:746.5px;font-size:13px;color:#e6e6e6;font-weight:normal;">Nov 2021</div>
<div class="t" style="left:1375.34px;transform:translateX(-50%);top:746.5px;font-size:13px;color:#e6e6e6;font-weight:normal;">Feb 2022</div>
<div class="t" style="left:1433.18px;transform:translateX(-50%);top:746.5px;font-size:13px;color:#e6e6e6;font-weight:normal;">Mai 2022</div>
<div class="t" style="left:1491.02px;transform:translateX(-50%);top:746.5px;font-size:13px;color:#e6e6e6;font-weight:normal;">Aug 2022</div>
<div class="t" style="left:1548.8600000000001px;transform:translateX(-50%);top:746.5px;font-size:13px;color:#e6e6e6;font-weight:normal;">Nov 2022</div>
<div class="t" style="left:1606.7px;transform:translateX(-50%);top:746.5px;font-size:13px;color:#e6e6e6;font-weight:normal;">Feb 2023</div>
<div class="abs" style="left:183.5px;top:140px;width:26px;height:26px;border-radius:50%;background:#1f95a4"><svg width="26" height="26" viewBox="0 0 26 26"><path d="M6 10.5 L20 12.5" stroke="#f4f4f4" stroke-width="2.2" stroke-linecap="round"/><path d="M13 12 L10 17.5 H16Z" fill="#f4f4f4"/></svg></div><div class="t" style="left:219px;top:141.5px;font-size:10.8px;color:#f2f2f2;font-weight:bold;">KONTOSTAND</div>
<div class="t" style="left:219px;top:156px;font-size:18px;color:#fafafa;font-weight:bold;">€42,430,339</div>
<div class="abs" style="left:183.5px;top:365px;width:26px;height:26px;border-radius:50%;background:#1f95a4"><svg width="26" height="26" viewBox="0 0 26 26"><path d="M8 17.5 L18 8.5" stroke="#f4f4f4" stroke-width="1.6"/><path d="M8 13 V7 M5.8 9 L8 6.5 L10.2 9" stroke="#f4f4f4" stroke-width="1.6" fill="none"/><path d="M18 13 V19 M15.8 17 L18 19.5 L20.2 17" stroke="#f4f4f4" stroke-width="1.6" fill="none"/></svg></div><div class="t" style="left:219px;top:367px;font-size:10.9px;color:#f2f2f2;font-weight:bold;">GEWINN / VERLUST IN DIESEM MONAT</div>
<div class="t" style="left:219px;top:382px;font-size:16px;color:#e8554e;font-weight:bold;">(€1,296,171)</div>
<div class="t" style="left:937px;top:367px;font-size:10.7px;color:#f2f2f2;font-weight:bold;">DIESE SAISON</div>
<div class="t" style="left:937px;top:382px;font-size:17.2px;color:#e8554e;font-weight:bold;">(€2,571,336)</div>
<div class="t" style="left:1296px;top:367px;font-size:10.4px;color:#f2f2f2;font-weight:bold;">LETZTE SAISON</div>
<div class="t" style="left:1296px;top:382px;font-size:16.8px;color:#fafafa;font-weight:bold;">€9,131,892</div>
<div class="abs" style="left:183.5px;top:590px;width:26px;height:26px;border-radius:50%;background:#1f95a4"><svg width="26" height="26" viewBox="0 0 26 26"><path d="M13 6.5 L19 12.5 H15.5 V19 H10.5 V12.5 H7Z" fill="#f4f4f4"/></svg></div><div class="t" style="left:219px;top:592px;font-size:11px;color:#f2f2f2;font-weight:bold;">EINNAHMEN IN DIESEM MONAT</div>
<div class="t" style="left:219px;top:606px;font-size:17.3px;color:#fafafa;font-weight:bold;">€1,558,949</div>
<div class="abs" style="left:921.5px;top:590px;width:26px;height:26px;border-radius:50%;background:#1f95a4"><svg width="26" height="26" viewBox="0 0 26 26"><path d="M13 19.5 L19 13.5 H15.5 V7 H10.5 V13.5 H7Z" fill="#f4f4f4"/></svg></div><div class="t" style="left:957px;top:592px;font-size:10.9px;color:#f2f2f2;font-weight:bold;">AUSGABEN IN DIESEM MONAT</div>
<div class="t" style="left:957px;top:606px;font-size:17.3px;color:#fafafa;font-weight:bold;">€2,855,120</div>
<div class="abs" style="left:1661.5px;top:140px;width:26px;height:26px;border-radius:50%;background:#1f95a4"><svg width="26" height="26" viewBox="0 0 26 26"><path d="M6 13 Q6 8.5 12 8.5 H15 Q17 7 18.5 8 L18 10 Q20 11 20.5 13 H21 V15 H20 Q19 17 17.5 17.5 V19 H15.5 V18 H10.5 V19 H8.5 V17.5 Q6 16 6 13Z" fill="#f4f4f4"/></svg></div><div class="t" style="left:1696px;top:146px;font-size:10.3px;color:#f2f2f2;font-weight:bold;">BUDGETS</div>
<div class="t" style="left:1696px;top:166px;font-size:10.25px;color:#f2f2f2;font-weight:bold;">TRANSFERBUDGET</div>
<div class="t" style="left:1696px;top:180px;font-size:16.9px;color:#fafafa;font-weight:bold;">€50,617,516</div>
<div class="t" style="left:1696px;top:200px;font-size:11.8px;color:#9a9a9a;font-weight:normal;">Das Anfangsbudget betrug</div>
<div class="t" style="left:1696px;top:217px;font-size:11.8px;color:#9a9a9a;font-weight:normal;">€24.83Mio.</div>
<div class="t" style="left:1696px;top:234px;font-size:11.8px;color:#9a9a9a;font-weight:normal;">100% der Transfereinnahmen sind</div>
<div class="t" style="left:1696px;top:251px;font-size:11.8px;color:#9a9a9a;font-weight:normal;">verfügbar, bis €16.76Mio an</div>
<div class="t" style="left:1696px;top:268px;font-size:11.8px;color:#9a9a9a;font-weight:normal;">Einnahmen generiert worden sind.</div>
<div class="t" style="left:1696px;top:285px;font-size:11.8px;color:#9a9a9a;font-weight:normal;">Danach sinkt dieser Wert auf 60%.</div>
<div class="abs" style="left:1696px;top:310px;width:198px;height:1px;background:#3e3d38"></div><div class="t" style="left:1696px;top:313px;font-size:10.45px;color:#f2f2f2;font-weight:bold;">GEHALTSBUDGET</div>
<div class="t" style="left:1696px;top:327px;font-size:17.8px;color:#fafafa;font-weight:bold;">€647,826 /W.</div>
<div class="t" style="left:1696px;top:347px;font-size:11.8px;color:#9a9a9a;font-weight:normal;">Aktuelle Ausgaben: €481,100 /W.</div>
<div class="t" style="left:1696px;top:364px;font-size:11.8px;color:#9a9a9a;font-weight:normal;">Verbindliche Ausgaben: €500,815</div>
<div class="t" style="left:1696px;top:381px;font-size:11.8px;color:#9a9a9a;font-weight:normal;">/W.</div>
<div class="t" style="left:1696px;top:398px;font-size:11.8px;color:#9a9a9a;font-weight:normal;">Gehaltsbudget nächste Saison:</div>
<div class="t" style="left:1696px;top:415px;font-size:11.8px;color:#9a9a9a;font-weight:normal;">€625K pro Woche</div>
<div class="abs" style="left:1696px;top:440px;width:198px;height:1px;background:#3e3d38"></div><div class="t" style="left:1696px;top:443px;font-size:10.5px;color:#f2f2f2;font-weight:bold;">SCOUTINGBUDGET</div>
<div class="t" style="left:1696px;top:457px;font-size:17.9px;color:#fafafa;font-weight:bold;">€442,803</div>
<div class="abs" style="left:1696px;top:485px;width:198px;height:1px;background:#3e3d38"></div><div class="t" style="left:1696px;top:492px;font-size:10.7px;color:#f2f2f2;font-weight:bold;">BUDGETS ANPASSEN</div>
<div class="abs" style="left:1699px;top:512px;width:193px;height:21px;background:#2a2b2e;border:1px solid #45464a"></div><div class="t" style="left:1706px;top:516px;font-size:13px;color:#e8e8e8;font-weight:normal;">Budgetanpassung</div>
<svg class="abs" style="left:1871px;top:520px" width="11" height="8" viewBox="0 0 11 8"><path d="M1.5 1.5 L5.5 5.5 L9.5 1.5" stroke="#f0f0f0" stroke-width="2.2" fill="none"/></svg><div class="abs" style="left:1699px;top:543px;width:193px;height:21px;background:#2a2b2e;border:1px solid #45464a"></div><div class="t" style="left:1706px;top:547px;font-size:13px;color:#e8e8e8;font-weight:normal;">Beim Vorstand anfragen</div>
<svg class="abs" style="left:1871px;top:551px" width="11" height="8" viewBox="0 0 11 8"><path d="M1.5 1.5 L5.5 5.5 L9.5 1.5" stroke="#f0f0f0" stroke-width="2.2" fill="none"/></svg><div class="t" style="left:219px;top:766px;font-size:9.6px;color:#b8b8b8;font-weight:bold;">AUFSCHLÜSSELUNG</div>
<div class="t" style="left:957px;top:766px;font-size:9.6px;color:#b8b8b8;font-weight:bold;">AUFSCHLÜSSELUNG</div>
<div class="t" style="left:224px;top:786px;font-size:11.9px;color:#a6a6a6;font-weight:normal;">Kartenverkauf</div>
<div class="t" style="right:1012px;top:786px;font-size:11.9px;color:#a6a6a6;font-weight:normal;">€970,224</div>
<div class="t" style="left:224px;top:806px;font-size:11.9px;color:#a6a6a6;font-weight:normal;">Einnahmen Businessbereich</div>
<div class="t" style="right:1012px;top:806px;font-size:11.9px;color:#a6a6a6;font-weight:normal;">€203,225</div>
<div class="t" style="left:224px;top:826px;font-size:11.9px;color:#a6a6a6;font-weight:normal;">Fanartikel</div>
<div class="t" style="right:1012px;top:826px;font-size:11.9px;color:#a6a6a6;font-weight:normal;">€161,778</div>
<div class="t" style="left:224px;top:846px;font-size:11.9px;color:#a6a6a6;font-weight:normal;">Spieltagseinnahmen</div>
<div class="t" style="right:1012px;top:846px;font-size:11.9px;color:#a6a6a6;font-weight:normal;">€106,575</div>
<div class="t" style="left:224px;top:866px;font-size:11.9px;color:#a6a6a6;font-weight:normal;">TV-Einnahmen</div>
<div class="t" style="right:1012px;top:866px;font-size:11.9px;color:#a6a6a6;font-weight:normal;">€60,054</div>
<div class="t" style="left:224px;top:886px;font-size:11.9px;color:#a6a6a6;font-weight:normal;">Zinsen</div>
<div class="t" style="right:1012px;top:886px;font-size:11.9px;color:#a6a6a6;font-weight:normal;">€25,662</div>
<div class="t" style="left:224px;top:906px;font-size:11.9px;color:#a6a6a6;font-weight:normal;">Preisgelder</div>
<div class="t" style="right:1012px;top:906px;font-size:11.9px;color:#a6a6a6;font-weight:normal;">€21,933</div>
<div class="t" style="left:962px;top:786px;font-size:11.9px;color:#a6a6a6;font-weight:normal;">Spielergehälter</div>
<div class="t" style="right:273px;top:786px;font-size:11.9px;color:#a6a6a6;font-weight:normal;">€1,169,745</div>
<div class="t" style="left:962px;top:806px;font-size:11.9px;color:#a6a6a6;font-weight:normal;">Mitarbeitergehälter</div>
<div class="t" style="right:273px;top:806px;font-size:11.9px;color:#a6a6a6;font-weight:normal;">€348,230</div>
<div class="t" style="left:962px;top:826px;font-size:11.9px;color:#a6a6a6;font-weight:normal;">Spieltagsausgaben</div>
<div class="t" style="right:273px;top:826px;font-size:11.9px;color:#a6a6a6;font-weight:normal;">€323,747</div>
<div class="t" style="left:962px;top:846px;font-size:11.9px;color:#a6a6a6;font-weight:normal;">Prämien</div>
<div class="t" style="right:273px;top:846px;font-size:11.9px;color:#a6a6a6;font-weight:normal;">€304,225</div>
<div class="t" style="left:962px;top:866px;font-size:11.9px;color:#a6a6a6;font-weight:normal;">Steuern</div>
<div class="t" style="right:273px;top:866px;font-size:11.9px;color:#a6a6a6;font-weight:normal;">€226,394</div>
<div class="t" style="left:962px;top:886px;font-size:11.9px;color:#a6a6a6;font-weight:normal;">Loyalitätsboni</div>
<div class="t" style="right:273px;top:886px;font-size:11.9px;color:#a6a6a6;font-weight:normal;">€210,692</div>
<div class="t" style="left:962px;top:906px;font-size:11.9px;color:#a6a6a6;font-weight:normal;">Instandhaltung</div>
<div class="t" style="right:273px;top:906px;font-size:11.9px;color:#a6a6a6;font-weight:normal;">€96,782</div>
<div class="abs" style="left:912px;top:782px;width:4px;height:140px;background:#1c1d20"></div><div class="abs" style="left:912px;top:782px;width:3px;height:70px;background:#7a7a7a;border-radius:1px"></div><div class="abs" style="left:1651px;top:782px;width:4px;height:140px;background:#1c1d20"></div><div class="abs" style="left:1651px;top:782px;width:3px;height:52px;background:#7a7a7a;border-radius:1px"></div><div class="abs" style="left:185px;top:927px;width:1711px;height:128px;background:#1d1e21;border:1px solid #7b6d48;border-radius:4px"></div><div class="abs" style="left:186px;top:928px;width:1709px;height:23px;background:#121213;border-bottom:1px solid #7b6d48;border-radius:3px 3px 0 0"></div><div class="t" style="left:194px;top:933px;font-size:11.2px;color:#fafafa;font-weight:bold;">STAND FINANCIAL FAIRPLAY</div>
<div class="abs" style="left:194px;top:961px;width:1692px;height:80px;background:#13a345"></div><div class="t" style="left:202px;top:966px;font-size:16.4px;color:#f4fff4;font-weight:bold;">UEFA Europa Conference League, Spielzeit 2022/23</div>
<svg class="abs" style="left:203px;top:996px" width="13" height="11" viewBox="0 0 13 11"><path d="M1.5 5.5 L4.8 9 L11.5 1.5" stroke="#eaffea" stroke-width="2" fill="none"/></svg><div class="t" style="left:222px;top:996px;font-size:11.7px;color:#eefcee;font-weight:normal;">Der Verein ist auf Kurs, im aktuellen Zeitraum die FFP-Regularien des UEFA Europa Conference League zu erfüllen.</div>
<svg class="abs" style="left:15px;top:895px" width="130" height="150" viewBox="0 0 936 1080"><polygon points="195,126 219,186 282,190 233,230 249,292 195,258 141,292 157,230 108,190 171,186" fill="#e8ede6" stroke="#e8ede6" stroke-width="36" stroke-linejoin="round"/><polygon points="462,48 486,108 549,112 500,152 516,214 462,180 408,214 424,152 375,112 438,108" fill="#e8ede6" stroke="#e8ede6" stroke-width="36" stroke-linejoin="round"/><polygon points="730,126 754,186 817,190 768,230 784,292 730,258 676,292 692,230 643,190 706,186" fill="#e8ede6" stroke="#e8ede6" stroke-width="36" stroke-linejoin="round"/><circle cx="462" cy="692" r="300" fill="none" stroke="#e8ede6" stroke-width="150"/><rect x="62" y="525" width="805" height="305" fill="#e8ede6" rx="10"/><path d="M318 268 H612 V560 L462 612 L318 560 Z" fill="#e8ede6"/><polygon points="195,130 217,187 279,191 231,230 247,289 195,256 143,289 159,230 111,191 173,187" fill="#f4ec3a" stroke="#5a5020" stroke-width="8" stroke-linejoin="round"/><polygon points="462,52 484,109 546,113 498,152 514,211 462,178 410,211 426,152 378,113 440,109" fill="#f4ec3a" stroke="#5a5020" stroke-width="8" stroke-linejoin="round"/><polygon points="730,130 752,187 814,191 766,230 782,289 730,256 678,289 694,230 646,191 708,187" fill="#f4ec3a" stroke="#5a5020" stroke-width="8" stroke-linejoin="round"/><circle cx="462" cy="692" r="300" fill="none" stroke="#3a3410" stroke-width="124"/><circle cx="462" cy="692" r="300" fill="none" stroke="#efe43a" stroke-width="116"/><ellipse cx="730" cy="692" rx="34" ry="13" transform="rotate(125 730 692)" fill="#f2e83c" stroke="#3a3410" stroke-width="6"/><ellipse cx="794" cy="692" rx="34" ry="13" transform="rotate(55 794 692)" fill="#f2e83c" stroke="#3a3410" stroke-width="6"/><ellipse cx="726" cy="739" rx="34" ry="13" transform="rotate(135 726 739)" fill="#f2e83c" stroke="#3a3410" stroke-width="6"/><ellipse cx="789" cy="750" rx="34" ry="13" transform="rotate(65 789 750)" fill="#f2e83c" stroke="#3a3410" stroke-width="6"/><ellipse cx="714" cy="784" rx="34" ry="13" transform="rotate(145 714 784)" fill="#f2e83c" stroke="#3a3410" stroke-width="6"/><ellipse cx="774" cy="806" rx="34" ry="13" transform="rotate(75 774 806)" fill="#f2e83c" stroke="#3a3410" stroke-width="6"/><ellipse cx="694" cy="826" rx="34" ry="13" transform="rotate(155 694 826)" fill="#f2e83c" stroke="#3a3410" stroke-width="6"/><ellipse cx="750" cy="858" rx="34" ry="13" transform="rotate(85 750 858)" fill="#f2e83c" stroke="#3a3410" stroke-width="6"/><ellipse cx="667" cy="864" rx="34" ry="13" transform="rotate(165 667 864)" fill="#f2e83c" stroke="#3a3410" stroke-width="6"/><ellipse cx="716" cy="905" rx="34" ry="13" transform="rotate(95 716 905)" fill="#f2e83c" stroke="#3a3410" stroke-width="6"/><ellipse cx="634" cy="897" rx="34" ry="13" transform="rotate(175 634 897)" fill="#f2e83c" stroke="#3a3410" stroke-width="6"/><ellipse cx="675" cy="946" rx="34" ry="13" transform="rotate(105 675 946)" fill="#f2e83c" stroke="#3a3410" stroke-width="6"/><ellipse cx="596" cy="924" rx="34" ry="13" transform="rotate(185 596 924)" fill="#f2e83c" stroke="#3a3410" stroke-width="6"/><ellipse cx="628" cy="980" rx="34" ry="13" transform="rotate(115 628 980)" fill="#f2e83c" stroke="#3a3410" stroke-width="6"/><ellipse cx="554" cy="944" rx="34" ry="13" transform="rotate(195 554 944)" fill="#f2e83c" stroke="#3a3410" stroke-width="6"/><ellipse cx="576" cy="1004" rx="34" ry="13" transform="rotate(125 576 1004)" fill="#f2e83c" stroke="#3a3410" stroke-width="6"/><ellipse cx="509" cy="956" rx="34" ry="13" transform="rotate(205 509 956)" fill="#f2e83c" stroke="#3a3410" stroke-width="6"/><ellipse cx="520" cy="1019" rx="34" ry="13" transform="rotate(135 520 1019)" fill="#f2e83c" stroke="#3a3410" stroke-width="6"/><ellipse cx="462" cy="960" rx="34" ry="13" transform="rotate(215 462 960)" fill="#f2e83c" stroke="#3a3410" stroke-width="6"/><ellipse cx="462" cy="1024" rx="34" ry="13" transform="rotate(145 462 1024)" fill="#f2e83c" stroke="#3a3410" stroke-width="6"/><ellipse cx="415" cy="956" rx="34" ry="13" transform="rotate(225 415 956)" fill="#f2e83c" stroke="#3a3410" stroke-width="6"/><ellipse cx="404" cy="1019" rx="34" ry="13" transform="rotate(155 404 1019)" fill="#f2e83c" stroke="#3a3410" stroke-width="6"/><ellipse cx="370" cy="944" rx="34" ry="13" transform="rotate(235 370 944)" fill="#f2e83c" stroke="#3a3410" stroke-width="6"/><ellipse cx="348" cy="1004" rx="34" ry="13" transform="rotate(165 348 1004)" fill="#f2e83c" stroke="#3a3410" stroke-width="6"/><ellipse cx="328" cy="924" rx="34" ry="13" transform="rotate(245 328 924)" fill="#f2e83c" stroke="#3a3410" stroke-width="6"/><ellipse cx="296" cy="980" rx="34" ry="13" transform="rotate(175 296 980)" fill="#f2e83c" stroke="#3a3410" stroke-width="6"/><ellipse cx="290" cy="897" rx="34" ry="13" transform="rotate(255 290 897)" fill="#f2e83c" stroke="#3a3410" stroke-width="6"/><ellipse cx="249" cy="946" rx="34" ry="13" transform="rotate(185 249 946)" fill="#f2e83c" stroke="#3a3410" stroke-width="6"/><ellipse cx="257" cy="864" rx="34" ry="13" transform="rotate(265 257 864)" fill="#f2e83c" stroke="#3a3410" stroke-width="6"/><ellipse cx="208" cy="905" rx="34" ry="13" transform="rotate(195 208 905)" fill="#f2e83c" stroke="#3a3410" stroke-width="6"/><ellipse cx="230" cy="826" rx="34" ry="13" transform="rotate(275 230 826)" fill="#f2e83c" stroke="#3a3410" stroke-width="6"/><ellipse cx="174" cy="858" rx="34" ry="13" transform="rotate(205 174 858)" fill="#f2e83c" stroke="#3a3410" stroke-width="6"/><ellipse cx="210" cy="784" rx="34" ry="13" transform="rotate(285 210 784)" fill="#f2e83c" stroke="#3a3410" stroke-width="6"/><ellipse cx="150" cy="806" rx="34" ry="13" transform="rotate(215 150 806)" fill="#f2e83c" stroke="#3a3410" stroke-width="6"/><ellipse cx="198" cy="739" rx="34" ry="13" transform="rotate(295 198 739)" fill="#f2e83c" stroke="#3a3410" stroke-width="6"/><ellipse cx="135" cy="750" rx="34" ry="13" transform="rotate(225 135 750)" fill="#f2e83c" stroke="#3a3410" stroke-width="6"/><ellipse cx="194" cy="692" rx="34" ry="13" transform="rotate(305 194 692)" fill="#f2e83c" stroke="#3a3410" stroke-width="6"/><ellipse cx="130" cy="692" rx="34" ry="13" transform="rotate(235 130 692)" fill="#f2e83c" stroke="#3a3410" stroke-width="6"/><ellipse cx="198" cy="645" rx="34" ry="13" transform="rotate(315 198 645)" fill="#f2e83c" stroke="#3a3410" stroke-width="6"/><ellipse cx="135" cy="634" rx="34" ry="13" transform="rotate(245 135 634)" fill="#f2e83c" stroke="#3a3410" stroke-width="6"/><ellipse cx="210" cy="600" rx="34" ry="13" transform="rotate(325 210 600)" fill="#f2e83c" stroke="#3a3410" stroke-width="6"/><ellipse cx="150" cy="578" rx="34" ry="13" transform="rotate(255 150 578)" fill="#f2e83c" stroke="#3a3410" stroke-width="6"/><ellipse cx="230" cy="558" rx="34" ry="13" transform="rotate(335 230 558)" fill="#f2e83c" stroke="#3a3410" stroke-width="6"/><ellipse cx="174" cy="526" rx="34" ry="13" transform="rotate(265 174 526)" fill="#f2e83c" stroke="#3a3410" stroke-width="6"/><ellipse cx="257" cy="520" rx="34" ry="13" transform="rotate(345 257 520)" fill="#f2e83c" stroke="#3a3410" stroke-width="6"/><ellipse cx="208" cy="479" rx="34" ry="13" transform="rotate(275 208 479)" fill="#f2e83c" stroke="#3a3410" stroke-width="6"/><ellipse cx="290" cy="487" rx="34" ry="13" transform="rotate(355 290 487)" fill="#f2e83c" stroke="#3a3410" stroke-width="6"/><ellipse cx="249" cy="438" rx="34" ry="13" transform="rotate(285 249 438)" fill="#f2e83c" stroke="#3a3410" stroke-width="6"/><ellipse cx="328" cy="460" rx="34" ry="13" transform="rotate(365 328 460)" fill="#f2e83c" stroke="#3a3410" stroke-width="6"/><ellipse cx="296" cy="404" rx="34" ry="13" transform="rotate(295 296 404)" fill="#f2e83c" stroke="#3a3410" stroke-width="6"/><ellipse cx="370" cy="440" rx="34" ry="13" transform="rotate(375 370 440)" fill="#f2e83c" stroke="#3a3410" stroke-width="6"/><ellipse cx="348" cy="380" rx="34" ry="13" transform="rotate(305 348 380)" fill="#f2e83c" stroke="#3a3410" stroke-width="6"/><ellipse cx="415" cy="428" rx="34" ry="13" transform="rotate(385 415 428)" fill="#f2e83c" stroke="#3a3410" stroke-width="6"/><ellipse cx="404" cy="365" rx="34" ry="13" transform="rotate(315 404 365)" fill="#f2e83c" stroke="#3a3410" stroke-width="6"/><ellipse cx="462" cy="424" rx="34" ry="13" transform="rotate(395 462 424)" fill="#f2e83c" stroke="#3a3410" stroke-width="6"/><ellipse cx="462" cy="360" rx="34" ry="13" transform="rotate(325 462 360)" fill="#f2e83c" stroke="#3a3410" stroke-width="6"/><ellipse cx="509" cy="428" rx="34" ry="13" transform="rotate(405 509 428)" fill="#f2e83c" stroke="#3a3410" stroke-width="6"/><ellipse cx="520" cy="365" rx="34" ry="13" transform="rotate(335 520 365)" fill="#f2e83c" stroke="#3a3410" stroke-width="6"/><ellipse cx="554" cy="440" rx="34" ry="13" transform="rotate(415 554 440)" fill="#f2e83c" stroke="#3a3410" stroke-width="6"/><ellipse cx="576" cy="380" rx="34" ry="13" transform="rotate(345 576 380)" fill="#f2e83c" stroke="#3a3410" stroke-width="6"/><ellipse cx="596" cy="460" rx="34" ry="13" transform="rotate(425 596 460)" fill="#f2e83c" stroke="#3a3410" stroke-width="6"/><ellipse cx="628" cy="404" rx="34" ry="13" transform="rotate(355 628 404)" fill="#f2e83c" stroke="#3a3410" stroke-width="6"/><ellipse cx="634" cy="487" rx="34" ry="13" transform="rotate(435 634 487)" fill="#f2e83c" stroke="#3a3410" stroke-width="6"/><ellipse cx="675" cy="438" rx="34" ry="13" transform="rotate(365 675 438)" fill="#f2e83c" stroke="#3a3410" stroke-width="6"/><ellipse cx="667" cy="520" rx="34" ry="13" transform="rotate(445 667 520)" fill="#f2e83c" stroke="#3a3410" stroke-width="6"/><ellipse cx="716" cy="479" rx="34" ry="13" transform="rotate(375 716 479)" fill="#f2e83c" stroke="#3a3410" stroke-width="6"/><ellipse cx="694" cy="558" rx="34" ry="13" transform="rotate(455 694 558)" fill="#f2e83c" stroke="#3a3410" stroke-width="6"/><ellipse cx="750" cy="526" rx="34" ry="13" transform="rotate(385 750 526)" fill="#f2e83c" stroke="#3a3410" stroke-width="6"/><ellipse cx="714" cy="600" rx="34" ry="13" transform="rotate(465 714 600)" fill="#f2e83c" stroke="#3a3410" stroke-width="6"/><ellipse cx="774" cy="578" rx="34" ry="13" transform="rotate(395 774 578)" fill="#f2e83c" stroke="#3a3410" stroke-width="6"/><ellipse cx="726" cy="645" rx="34" ry="13" transform="rotate(475 726 645)" fill="#f2e83c" stroke="#3a3410" stroke-width="6"/><ellipse cx="789" cy="634" rx="34" ry="13" transform="rotate(405 789 634)" fill="#f2e83c" stroke="#3a3410" stroke-width="6"/><path d="M432 925 Q462 950 495 925 Q505 975 480 978 Q505 982 495 1030 Q462 1005 432 1030 Q420 982 445 978 Q420 975 432 925Z" fill="#111"/><rect x="88" y="548" width="755" height="258" fill="#1e3a8a" stroke="#9c9a40" stroke-width="14"/><text x="468" y="770" text-anchor="middle" font-family="Liberation Sans" font-weight="bold" font-size="215" fill="#ef4a30" textLength="630" lengthAdjust="spacingAndGlyphs">RAPID</text><clipPath id="shc15"><path d="M345 295 H585 V545 L462 585 L345 545 Z"/></clipPath><path d="M345 295 H585 V545 L462 585 L345 545 Z" fill="#f4f6f2"/><g clip-path="url(#shc15)"><path d="M150 620 L450 250 L530 250 L230 620Z" fill="#1f8a4c"/><path d="M330 620 L630 250 L710 250 L410 620Z" fill="#1f8a4c"/><path d="M510 620 L810 250 L890 250 L590 620Z" fill="#1f8a4c"/></g><path d="M345 295 H585 V545 L462 585 L345 545 Z" fill="none" stroke="#9c9a40" stroke-width="14"/></svg><svg class="abs" style="left:256px;top:8px" width="56" height="65" viewBox="0 0 936 1080"><polygon points="195,126 219,186 282,190 233,230 249,292 195,258 141,292 157,230 108,190 171,186" fill="#e8ede6" stroke="#e8ede6" stroke-width="36" stroke-linejoin="round"/><polygon points="462,48 486,108 549,112 500,152 516,214 462,180 408,214 424,152 375,112 438,108" fill="#e8ede6" stroke="#e8ede6" stroke-width="36" stroke-linejoin="round"/><polygon points="730,126 754,186 817,190 768,230 784,292 730,258 676,292 692,230 643,190 706,186" fill="#e8ede6" stroke="#e8ede6" stroke-width="36" stroke-linejoin="round"/><circle cx="462" cy="692" r="300" fill="none" stroke="#e8ede6" stroke-width="150"/><rect x="62" y="525" width="805" height="305" fill="#e8ede6" rx="10"/><path d="M318 268 H612 V560 L462 612 L318 560 Z" fill="#e8ede6"/><polygon points="195,130 217,187 279,191 231,230 247,289 195,256 143,289 159,230 111,191 173,187" fill="#f4ec3a" stroke="#5a5020" stroke-width="8" stroke-linejoin="round"/><polygon points="462,52 484,109 546,113 498,152 514,211 462,178 410,211 426,152 378,113 440,109" fill="#f4ec3a" stroke="#5a5020" stroke-width="8" stroke-linejoin="round"/><polygon points="730,130 752,187 814,191 766,230 782,289 730,256 678,289 694,230 646,191 708,187" fill="#f4ec3a" stroke="#5a5020" stroke-width="8" stroke-linejoin="round"/><circle cx="462" cy="692" r="300" fill="none" stroke="#3a3410" stroke-width="124"/><circle cx="462" cy="692" r="300" fill="none" stroke="#efe43a" stroke-width="116"/><ellipse cx="730" cy="692" rx="34" ry="13" transform="rotate(125 730 692)" fill="#f2e83c" stroke="#3a3410" stroke-width="6"/><ellipse cx="794" cy="692" rx="34" ry="13" transform="rotate(55 794 692)" fill="#f2e83c" stroke="#3a3410" stroke-width="6"/><ellipse cx="726" cy="739" rx="34" ry="13" transform="rotate(135 726 739)" fill="#f2e83c" stroke="#3a3410" stroke-width="6"/><ellipse cx="789" cy="750" rx="34" ry="13" transform="rotate(65 789 750)" fill="#f2e83c" stroke="#3a3410" stroke-width="6"/><ellipse cx="714" cy="784" rx="34" ry="13" transform="rotate(145 714 784)" fill="#f2e83c" stroke="#3a3410" stroke-width="6"/><ellipse cx="774" cy="806" rx="34" ry="13" transform="rotate(75 774 806)" fill="#f2e83c" stroke="#3a3410" stroke-width="6"/><ellipse cx="694" cy="826" rx="34" ry="13" transform="rotate(155 694 826)" fill="#f2e83c" stroke="#3a3410" stroke-width="6"/><ellipse cx="750" cy="858" rx="34" ry="13" transform="rotate(85 750 858)" fill="#f2e83c" stroke="#3a3410" stroke-width="6"/><ellipse cx="667" cy="864" rx="34" ry="13" transform="rotate(165 667 864)" fill="#f2e83c" stroke="#3a3410" stroke-width="6"/><ellipse cx="716" cy="905" rx="34" ry="13" transform="rotate(95 716 905)" fill="#f2e83c" stroke="#3a3410" stroke-width="6"/><ellipse cx="634" cy="897" rx="34" ry="13" transform="rotate(175 634 897)" fill="#f2e83c" stroke="#3a3410" stroke-width="6"/><ellipse cx="675" cy="946" rx="34" ry="13" transform="rotate(105 675 946)" fill="#f2e83c" stroke="#3a3410" stroke-width="6"/><ellipse cx="596" cy="924" rx="34" ry="13" transform="rotate(185 596 924)" fill="#f2e83c" stroke="#3a3410" stroke-width="6"/><ellipse cx="628" cy="980" rx="34" ry="13" transform="rotate(115 628 980)" fill="#f2e83c" stroke="#3a3410" stroke-width="6"/><ellipse cx="554" cy="944" rx="34" ry="13" transform="rotate(195 554 944)" fill="#f2e83c" stroke="#3a3410" stroke-width="6"/><ellipse cx="576" cy="1004" rx="34" ry="13" transform="rotate(125 576 1004)" fill="#f2e83c" stroke="#3a3410" stroke-width="6"/><ellipse cx="509" cy="956" rx="34" ry="13" transform="rotate(205 509 956)" fill="#f2e83c" stroke="#3a3410" stroke-width="6"/><ellipse cx="520" cy="1019" rx="34" ry="13" transform="rotate(135 520 1019)" fill="#f2e83c" stroke="#3a3410" stroke-width="6"/><ellipse cx="462" cy="960" rx="34" ry="13" transform="rotate(215 462 960)" fill="#f2e83c" stroke="#3a3410" stroke-width="6"/><ellipse cx="462" cy="1024" rx="34" ry="13" transform="rotate(145 462 1024)" fill="#f2e83c" stroke="#3a3410" stroke-width="6"/><ellipse cx="415" cy="956" rx="34" ry="13" transform="rotate(225 415 956)" fill="#f2e83c" stroke="#3a3410" stroke-width="6"/><ellipse cx="404" cy="1019" rx="34" ry="13" transform="rotate(155 404 1019)" fill="#f2e83c" stroke="#3a3410" stroke-width="6"/><ellipse cx="370" cy="944" rx="34" ry="13" transform="rotate(235 370 944)" fill="#f2e83c" stroke="#3a3410" stroke-width="6"/><ellipse cx="348" cy="1004" rx="34" ry="13" transform="rotate(165 348 1004)" fill="#f2e83c" stroke="#3a3410" stroke-width="6"/><ellipse cx="328" cy="924" rx="34" ry="13" transform="rotate(245 328 924)" fill="#f2e83c" stroke="#3a3410" stroke-width="6"/><ellipse cx="296" cy="980" rx="34" ry="13" transform="rotate(175 296 980)" fill="#f2e83c" stroke="#3a3410" stroke-width="6"/><ellipse cx="290" cy="897" rx="34" ry="13" transform="rotate(255 290 897)" fill="#f2e83c" stroke="#3a3410" stroke-width="6"/><ellipse cx="249" cy="946" rx="34" ry="13" transform="rotate(185 249 946)" fill="#f2e83c" stroke="#3a3410" stroke-width="6"/><ellipse cx="257" cy="864" rx="34" ry="13" transform="rotate(265 257 864)" fill="#f2e83c" stroke="#3a3410" stroke-width="6"/><ellipse cx="208" cy="905" rx="34" ry="13" transform="rotate(195 208 905)" fill="#f2e83c" stroke="#3a3410" stroke-width="6"/><ellipse cx="230" cy="826" rx="34" ry="13" transform="rotate(275 230 826)" fill="#f2e83c" stroke="#3a3410" stroke-width="6"/><ellipse cx="174" cy="858" rx="34" ry="13" transform="rotate(205 174 858)" fill="#f2e83c" stroke="#3a3410" stroke-width="6"/><ellipse cx="210" cy="784" rx="34" ry="13" transform="rotate(285 210 784)" fill="#f2e83c" stroke="#3a3410" stroke-width="6"/><ellipse cx="150" cy="806" rx="34" ry="13" transform="rotate(215 150 806)" fill="#f2e83c" stroke="#3a3410" stroke-width="6"/><ellipse cx="198" cy="739" rx="34" ry="13" transform="rotate(295 198 739)" fill="#f2e83c" stroke="#3a3410" stroke-width="6"/><ellipse cx="135" cy="750" rx="34" ry="13" transform="rotate(225 135 750)" fill="#f2e83c" stroke="#3a3410" stroke-width="6"/><ellipse cx="194" cy="692" rx="34" ry="13" transform="rotate(305 194 692)" fill="#f2e83c" stroke="#3a3410" stroke-width="6"/><ellipse cx="130" cy="692" rx="34" ry="13" transform="rotate(235 130 692)" fill="#f2e83c" stroke="#3a3410" stroke-width="6"/><ellipse cx="198" cy="645" rx="34" ry="13" transform="rotate(315 198 645)" fill="#f2e83c" stroke="#3a3410" stroke-width="6"/><ellipse cx="135" cy="634" rx="34" ry="13" transform="rotate(245 135 634)" fill="#f2e83c" stroke="#3a3410" stroke-width="6"/><ellipse cx="210" cy="600" rx="34" ry="13" transform="rotate(325 210 600)" fill="#f2e83c" stroke="#3a3410" stroke-width="6"/><ellipse cx="150" cy="578" rx="34" ry="13" transform="rotate(255 150 578)" fill="#f2e83c" stroke="#3a3410" stroke-width="6"/><ellipse cx="230" cy="558" rx="34" ry="13" transform="rotate(335 230 558)" fill="#f2e83c" stroke="#3a3410" stroke-width="6"/><ellipse cx="174" cy="526" rx="34" ry="13" transform="rotate(265 174 526)" fill="#f2e83c" stroke="#3a3410" stroke-width="6"/><ellipse cx="257" cy="520" rx="34" ry="13" transform="rotate(345 257 520)" fill="#f2e83c" stroke="#3a3410" stroke-width="6"/><ellipse cx="208" cy="479" rx="34" ry="13" transform="rotate(275 208 479)" fill="#f2e83c" stroke="#3a3410" stroke-width="6"/><ellipse cx="290" cy="487" rx="34" ry="13" transform="rotate(355 290 487)" fill="#f2e83c" stroke="#3a3410" stroke-width="6"/><ellipse cx="249" cy="438" rx="34" ry="13" transform="rotate(285 249 438)" fill="#f2e83c" stroke="#3a3410" stroke-width="6"/><ellipse cx="328" cy="460" rx="34" ry="13" transform="rotate(365 328 460)" fill="#f2e83c" stroke="#3a3410" stroke-width="6"/><ellipse cx="296" cy="404" rx="34" ry="13" transform="rotate(295 296 404)" fill="#f2e83c" stroke="#3a3410" stroke-width="6"/><ellipse cx="370" cy="440" rx="34" ry="13" transform="rotate(375 370 440)" fill="#f2e83c" stroke="#3a3410" stroke-width="6"/><ellipse cx="348" cy="380" rx="34" ry="13" transform="rotate(305 348 380)" fill="#f2e83c" stroke="#3a3410" stroke-width="6"/><ellipse cx="415" cy="428" rx="34" ry="13" transform="rotate(385 415 428)" fill="#f2e83c" stroke="#3a3410" stroke-width="6"/><ellipse cx="404" cy="365" rx="34" ry="13" transform="rotate(315 404 365)" fill="#f2e83c" stroke="#3a3410" stroke-width="6"/><ellipse cx="462" cy="424" rx="34" ry="13" transform="rotate(395 462 424)" fill="#f2e83c" stroke="#3a3410" stroke-width="6"/><ellipse cx="462" cy="360" rx="34" ry="13" transform="rotate(325 462 360)" fill="#f2e83c" stroke="#3a3410" stroke-width="6"/><ellipse cx="509" cy="428" rx="34" ry="13" transform="rotate(405 509 428)" fill="#f2e83c" stroke="#3a3410" stroke-width="6"/><ellipse cx="520" cy="365" rx="34" ry="13" transform="rotate(335 520 365)" fill="#f2e83c" stroke="#3a3410" stroke-width="6"/><ellipse cx="554" cy="440" rx="34" ry="13" transform="rotate(415 554 440)" fill="#f2e83c" stroke="#3a3410" stroke-width="6"/><ellipse cx="576" cy="380" rx="34" ry="13" transform="rotate(345 576 380)" fill="#f2e83c" stroke="#3a3410" stroke-width="6"/><ellipse cx="596" cy="460" rx="34" ry="13" transform="rotate(425 596 460)" fill="#f2e83c" stroke="#3a3410" stroke-width="6"/><ellipse cx="628" cy="404" rx="34" ry="13" transform="rotate(355 628 404)" fill="#f2e83c" stroke="#3a3410" stroke-width="6"/><ellipse cx="634" cy="487" rx="34" ry="13" transform="rotate(435 634 487)" fill="#f2e83c" stroke="#3a3410" stroke-width="6"/><ellipse cx="675" cy="438" rx="34" ry="13" transform="rotate(365 675 438)" fill="#f2e83c" stroke="#3a3410" stroke-width="6"/><ellipse cx="667" cy="520" rx="34" ry="13" transform="rotate(445 667 520)" fill="#f2e83c" stroke="#3a3410" stroke-width="6"/><ellipse cx="716" cy="479" rx="34" ry="13" transform="rotate(375 716 479)" fill="#f2e83c" stroke="#3a3410" stroke-width="6"/><ellipse cx="694" cy="558" rx="34" ry="13" transform="rotate(455 694 558)" fill="#f2e83c" stroke="#3a3410" stroke-width="6"/><ellipse cx="750" cy="526" rx="34" ry="13" transform="rotate(385 750 526)" fill="#f2e83c" stroke="#3a3410" stroke-width="6"/><ellipse cx="714" cy="600" rx="34" ry="13" transform="rotate(465 714 600)" fill="#f2e83c" stroke="#3a3410" stroke-width="6"/><ellipse cx="774" cy="578" rx="34" ry="13" transform="rotate(395 774 578)" fill="#f2e83c" stroke="#3a3410" stroke-width="6"/><ellipse cx="726" cy="645" rx="34" ry="13" transform="rotate(475 726 645)" fill="#f2e83c" stroke="#3a3410" stroke-width="6"/><ellipse cx="789" cy="634" rx="34" ry="13" transform="rotate(405 789 634)" fill="#f2e83c" stroke="#3a3410" stroke-width="6"/><path d="M432 925 Q462 950 495 925 Q505 975 480 978 Q505 982 495 1030 Q462 1005 432 1030 Q420 982 445 978 Q420 975 432 925Z" fill="#111"/><rect x="88" y="548" width="755" height="258" fill="#1e3a8a" stroke="#9c9a40" stroke-width="14"/><text x="468" y="770" text-anchor="middle" font-family="Liberation Sans" font-weight="bold" font-size="215" fill="#ef4a30" textLength="630" lengthAdjust="spacingAndGlyphs">RAPID</text><clipPath id="shc256"><path d="M345 295 H585 V545 L462 585 L345 545 Z"/></clipPath><path d="M345 295 H585 V545 L462 585 L345 545 Z" fill="#f4f6f2"/><g clip-path="url(#shc256)"><path d="M150 620 L450 250 L530 250 L230 620Z" fill="#1f8a4c"/><path d="M330 620 L630 250 L710 250 L410 620Z" fill="#1f8a4c"/><path d="M510 620 L810 250 L890 250 L590 620Z" fill="#1f8a4c"/></g><path d="M345 295 H585 V545 L462 585 L345 545 Z" fill="none" stroke="#9c9a40" stroke-width="14"/></svg><svg class="abs" style="left:173px;top:30px" width="22" height="20" viewBox="0 0 22 20"><path d="M19 10.2 H3.5 M10.3 2.2 L2.8 10.2 L10.3 18.4" stroke="#f2f2f2" stroke-width="2.2" fill="none"/></svg><svg class="abs" style="left:213px;top:30px" width="22" height="20" viewBox="0 0 22 20"><path d="M2.4 10.2 H18 M11.2 2.2 L18.6 10.2 L11.2 18.4" stroke="#8e8e8e" stroke-width="2.2" fill="none"/></svg><svg class="abs" style="left:323px;top:19px" width="14" height="24" viewBox="0 0 14 24"><path d="M2 8 L7 3 L12 8 M2 15 L7 20 L12 15" stroke="#f0f0f0" stroke-width="2" fill="none"/></svg><svg class="abs" style="left:352px;top:30px" width="20" height="20" viewBox="0 0 20 20"><circle cx="7.5" cy="7.5" r="5.5" fill="#9a9a9a" stroke="#f0f0f0" stroke-width="2"/><path d="M11.5 11.5 L17 17" stroke="#f0f0f0" stroke-width="2.6" stroke-linecap="round"/></svg><div class="abs" style="left:1348px;top:0;width:1px;height:80px;background:#4a4536"></div><div class="abs" style="left:1568px;top:0;width:352px;height:41px;background:linear-gradient(90deg,rgba(58,140,86,.12) 0%,rgba(58,140,86,.3) 15%,rgba(58,140,86,.6) 40%,rgba(58,140,86,.9) 65%,#3a8c56 85%)"></div><svg class="abs" style="left:1522px;top:2px" width="47" height="77" viewBox="0 0 47 77">
<path d="M1.5 1.5 H45.5 V50 Q45.5 68 23.5 76 Q1.5 68 1.5 50 Z" fill="#f2f2f2" stroke="#cfcfcf" stroke-width="1.5"/>
<rect x="3.5" y="3.5" width="40" height="18" fill="#e0234a"/>
<text x="23.5" y="16.5" text-anchor="middle" font-family="Liberation Sans" font-weight="bold" font-style="italic" font-size="11.5" fill="#fff">tipico</text>
<path d="M4.5 22.5 H42.5 V50 Q42.5 65 23.5 72.5 Q4.5 65 4.5 50 Z" fill="none" stroke="#666" stroke-width="0.9"/>
<text x="23.5" y="31" text-anchor="middle" font-family="Liberation Sans" font-weight="bold" font-size="7.2" fill="#333" textLength="33" lengthAdjust="spacingAndGlyphs">BUNDES</text>
<text x="23.5" y="38.3" text-anchor="middle" font-family="Liberation Sans" font-weight="bold" font-size="7.2" fill="#333">LIGA</text>
<circle cx="23.5" cy="55" r="15" fill="#d4202a"/>
<path d="M11 47 Q22 40 34 47" stroke="#f6f6f6" stroke-width="3.2" fill="none"/>
<path d="M10 58 Q16 48 27 50" stroke="#f6f6f6" stroke-width="3" fill="none"/>
<path d="M28 50 Q31 60 22 68" stroke="#f6f6f6" stroke-width="3" fill="none"/>
<path d="M14 66 Q24 62 36 58" stroke="#f6f6f6" stroke-width="2.6" fill="none"/>
</svg><svg class="abs" style="left:1605px;top:30px" width="18" height="20" viewBox="0 0 18 20"><circle cx="9" cy="8" r="6.5" fill="#e8e8e8"/><circle cx="7" cy="6" r="1.5" fill="#555"/><circle cx="11" cy="9" r="1.3" fill="#555"/><path d="M9 15 V18 M5.5 18.5 H12.5" stroke="#e0e0e0" stroke-width="1.3"/></svg><svg class="abs" style="left:1637px;top:22px" width="38" height="38" viewBox="0 0 38 38"><circle cx="19" cy="19" r="15.5" fill="#f4f4f4"/><path d="M5 13 A15.5 15.5 0 0 1 30 6" stroke="#111" stroke-width="3.2" fill="none"/><path d="M34 22 A15.5 15.5 0 0 1 11 34" stroke="#e02020" stroke-width="3.2" fill="none"/><path d="M2 19.5 H9 M29 19.5 H36" stroke="#111" stroke-width="2.2"/><path d="M9.5 12 H17 L16.3 15 H12.8 L12.3 17.5 H15.5 L14.9 20.3 H11.7 L10.6 26 H7Z" fill="#111"/><path d="M17 26 L19.5 12 H23 L24 19 L28 12 H31.5 L29 26 H26 L27.3 19 L23.5 25 H22 L21 19 L19.8 26Z" fill="#e02020"/></svg><svg class="abs" style="left:1676px;top:18px" width="244" height="44" viewBox="0 0 244 44"><path d="M14 1 H107 L94 43 H6 Q1 43 2 38 L9 5 Q10 1 14 1Z" fill="#1a1d1c" opacity=".93"/><path d="M107 1 H244 V43 H94 Z" fill="#dcb02a"/><circle cx="216" cy="22" r="6" fill="#fafafa"/><path d="M214.5 18.5 L218 22 L214.5 25.5" stroke="#dcb02a" stroke-width="2" fill="none"/></svg><div class="t" style="left:1729px;transform:translateX(-50%);top:28px;font-size:12px;color:#fafafa;font-weight:bold;">25 FEB 2023</div>
<div class="t" style="left:1729px;transform:translateX(-50%);top:42px;font-size:11.5px;color:#dedede;font-weight:normal;">Sa 9:00</div>
<div class="t" style="left:1797px;top:35px;font-size:11.5px;color:#fff8e8;font-weight:bold;">FORTFAHREN</div>
<svg class="abs" style="left:1480px;top:80px" width="40" height="36" viewBox="0 0 40 36"><path d="M0 0 H13.5 L13 4 H25.5 L24.5 9.4 H8 L7.5 14.9 H36.5 L35 23 H4.5 L4 28.4 H17.5 L16.5 36 H0Z" fill="#3b8c57"/></svg><svg class="abs" style="left:1872px;top:88px" width="22" height="18" viewBox="0 0 22 18"><rect x="1.5" y="1.5" width="20" height="14" rx="2" fill="#4a0e12" stroke="#d8202a" stroke-width="2.2"/><path d="M7 17.8 H16" stroke="#d8202a" stroke-width="1.8"/></svg><svg class="abs" style="left:525px;top:94px" width="9" height="7" viewBox="0 0 9 7"><path d="M1 1.5 L4.5 5 L8 1.5" stroke="#e3f3e3" stroke-width="1.6" fill="none"/></svg><svg class="abs" style="left:579px;top:94px" width="9" height="7" viewBox="0 0 9 7"><path d="M1 1.5 L4.5 5 L8 1.5" stroke="#e3f3e3" stroke-width="1.6" fill="none"/></svg><svg class="abs" style="left:16px;top:1055px" width="15" height="9" viewBox="0 0 15 9"><rect x="0.5" y="0.5" width="12.5" height="8" fill="#dfe8df" stroke="#222" stroke-width="1"/><rect x="13" y="3" width="1.5" height="3" fill="#222"/><path d="M3 4.5 H9 M7 2.5 V6.5" stroke="#222" stroke-width="1.3"/></svg></body></html>
